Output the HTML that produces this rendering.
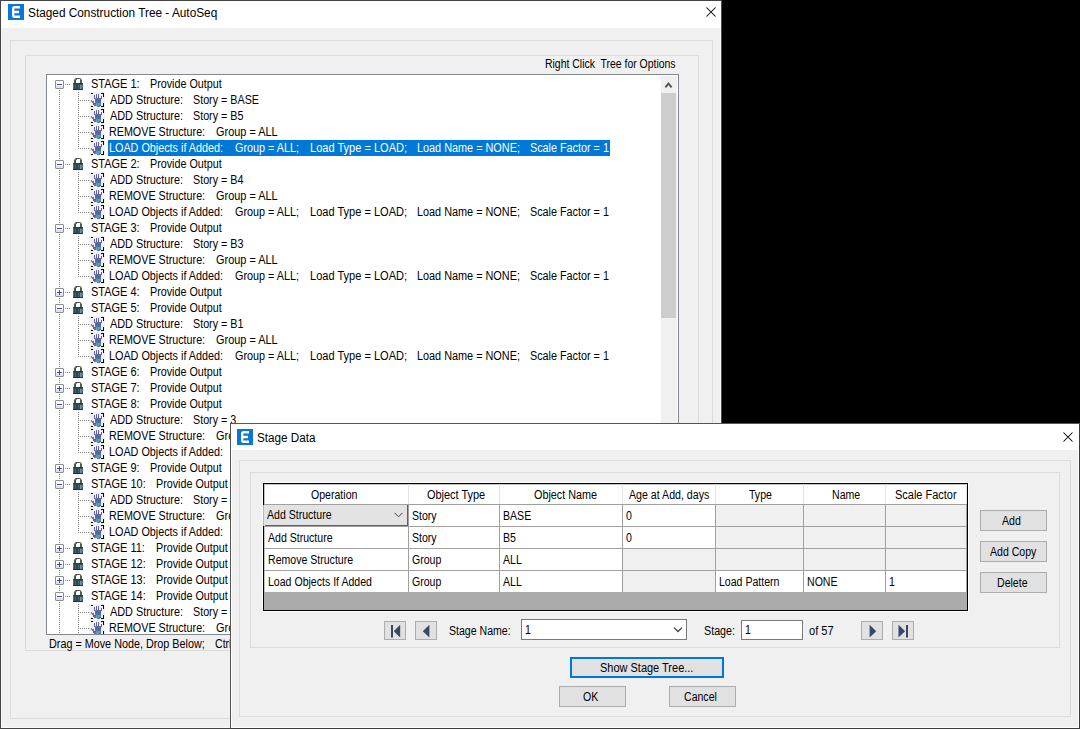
<!DOCTYPE html><html><head><meta charset="utf-8"><style>
html,body{margin:0;padding:0;width:1080px;height:729px;overflow:hidden;background:#000;}
body{position:relative;font-family:"Liberation Sans",sans-serif;}
.t{position:absolute;white-space:pre;line-height:16px;transform-origin:0 0;}
.abs{position:absolute;}
</style></head><body>
<div style="position:absolute;left:0px;top:0px;width:722px;height:729px;background:#f0f0f0;box-sizing:border-box;border:1px solid #444;border-right-color:#4a4a4a;box-shadow:inset 0 0 0 1px #f9f9f9;"></div>
<div style="position:absolute;left:1px;top:1px;width:720px;height:27px;background:#fff;"></div>
<svg class="abs" style="left:8px;top:4px" width="16" height="16" viewBox="0 0 16 16"><rect width="16" height="16" fill="#0a76d9"/><path d="M4 4.8 Q4 2 6.8 2 H12 V4.4 H6.3 V6.8 H11 V9.2 H6.3 V11.6 H12 V14 H6.8 Q4 14 4 11.2 Z" fill="#fff"/></svg>
<div class="t" style="left:28.20px;top:4.84px;font-size:12px;transform:scaleX(0.985);color:#000;">Staged Construction Tree - AutoSeq</div>
<svg class="abs" style="left:706px;top:7px" width="10" height="10" viewBox="0 0 10 10"><path d="M0.5 0.5 L9.5 9.5 M9.5 0.5 L0.5 9.5" stroke="#000" stroke-width="1.05"/></svg>
<div style="position:absolute;left:10px;top:40px;width:703px;height:679px;box-sizing:border-box;border:1px solid #dcdcdc;"></div>
<div style="position:absolute;left:25px;top:55px;width:674px;height:596px;box-sizing:border-box;border:1px solid #dcdcdc;"></div>
<div class="t" style="left:544.50px;top:55.84px;font-size:12px;transform:scaleX(0.87);color:#000;">Right Click  Tree for Options</div>
<div style="position:absolute;left:46px;top:74px;width:633px;height:561px;box-sizing:border-box;border:1px solid #828790;background:#fff;overflow:hidden;"></div>
<div style="position:absolute;left:661px;top:76px;width:16px;height:557px;background:#f0f0f0;"></div>
<div style="position:absolute;left:661px;top:93px;width:15px;height:225px;background:#cdcdcd;"></div>
<svg class="abs" style="left:664px;top:81px" width="9" height="8" viewBox="0 0 9 8"><path d="M1.4 6.4 L4.5 2.6 L7.6 6.4" stroke="#585858" stroke-width="2" fill="none"/></svg>
<div class="t" style="left:48.50px;top:635.84px;font-size:12px;transform:scaleX(0.9);color:#000;">Drag = Move Node, Drop Below;</div>
<div class="t" style="left:215.20px;top:635.84px;font-size:12px;transform:scaleX(0.88);color:#000;">Ctrl+Drag = Copy Node</div>
<div class="abs" style="left:47px;top:75px;width:614px;height:559px;overflow:hidden;">
<svg class="abs" style="left:0;top:0" width="614" height="580"><path d="M12 15h1v1h-1zM12 17h1v1h-1zM12 19h1v1h-1zM12 21h1v1h-1zM12 23h1v1h-1zM12 25h1v1h-1zM12 27h1v1h-1zM12 29h1v1h-1zM12 31h1v1h-1zM12 33h1v1h-1zM12 35h1v1h-1zM12 37h1v1h-1zM12 39h1v1h-1zM12 41h1v1h-1zM12 43h1v1h-1zM12 45h1v1h-1zM12 47h1v1h-1zM12 49h1v1h-1zM12 51h1v1h-1zM12 53h1v1h-1zM12 55h1v1h-1zM12 57h1v1h-1zM12 59h1v1h-1zM12 61h1v1h-1zM12 63h1v1h-1zM12 65h1v1h-1zM12 67h1v1h-1zM12 69h1v1h-1zM12 71h1v1h-1zM12 73h1v1h-1zM12 75h1v1h-1zM12 77h1v1h-1zM12 79h1v1h-1zM12 81h1v1h-1zM12 83h1v1h-1zM12 85h1v1h-1zM12 87h1v1h-1zM12 89h1v1h-1zM12 91h1v1h-1zM12 93h1v1h-1zM12 95h1v1h-1zM12 97h1v1h-1zM12 99h1v1h-1zM12 101h1v1h-1zM12 103h1v1h-1zM12 105h1v1h-1zM12 107h1v1h-1zM12 109h1v1h-1zM12 111h1v1h-1zM12 113h1v1h-1zM12 115h1v1h-1zM12 117h1v1h-1zM12 119h1v1h-1zM12 121h1v1h-1zM12 123h1v1h-1zM12 125h1v1h-1zM12 127h1v1h-1zM12 129h1v1h-1zM12 131h1v1h-1zM12 133h1v1h-1zM12 135h1v1h-1zM12 137h1v1h-1zM12 139h1v1h-1zM12 141h1v1h-1zM12 143h1v1h-1zM12 145h1v1h-1zM12 147h1v1h-1zM12 149h1v1h-1zM12 151h1v1h-1zM12 153h1v1h-1zM12 155h1v1h-1zM12 157h1v1h-1zM12 159h1v1h-1zM12 161h1v1h-1zM12 163h1v1h-1zM12 165h1v1h-1zM12 167h1v1h-1zM12 169h1v1h-1zM12 171h1v1h-1zM12 173h1v1h-1zM12 175h1v1h-1zM12 177h1v1h-1zM12 179h1v1h-1zM12 181h1v1h-1zM12 183h1v1h-1zM12 185h1v1h-1zM12 187h1v1h-1zM12 189h1v1h-1zM12 191h1v1h-1zM12 193h1v1h-1zM12 195h1v1h-1zM12 197h1v1h-1zM12 199h1v1h-1zM12 201h1v1h-1zM12 203h1v1h-1zM12 205h1v1h-1zM12 207h1v1h-1zM12 209h1v1h-1zM12 211h1v1h-1zM12 213h1v1h-1zM12 215h1v1h-1zM12 217h1v1h-1zM12 219h1v1h-1zM12 221h1v1h-1zM12 223h1v1h-1zM12 225h1v1h-1zM12 227h1v1h-1zM12 229h1v1h-1zM12 231h1v1h-1zM12 233h1v1h-1zM12 235h1v1h-1zM12 237h1v1h-1zM12 239h1v1h-1zM12 241h1v1h-1zM12 243h1v1h-1zM12 245h1v1h-1zM12 247h1v1h-1zM12 249h1v1h-1zM12 251h1v1h-1zM12 253h1v1h-1zM12 255h1v1h-1zM12 257h1v1h-1zM12 259h1v1h-1zM12 261h1v1h-1zM12 263h1v1h-1zM12 265h1v1h-1zM12 267h1v1h-1zM12 269h1v1h-1zM12 271h1v1h-1zM12 273h1v1h-1zM12 275h1v1h-1zM12 277h1v1h-1zM12 279h1v1h-1zM12 281h1v1h-1zM12 283h1v1h-1zM12 285h1v1h-1zM12 287h1v1h-1zM12 289h1v1h-1zM12 291h1v1h-1zM12 293h1v1h-1zM12 295h1v1h-1zM12 297h1v1h-1zM12 299h1v1h-1zM12 301h1v1h-1zM12 303h1v1h-1zM12 305h1v1h-1zM12 307h1v1h-1zM12 309h1v1h-1zM12 311h1v1h-1zM12 313h1v1h-1zM12 315h1v1h-1zM12 317h1v1h-1zM12 319h1v1h-1zM12 321h1v1h-1zM12 323h1v1h-1zM12 325h1v1h-1zM12 327h1v1h-1zM12 329h1v1h-1zM12 331h1v1h-1zM12 333h1v1h-1zM12 335h1v1h-1zM12 337h1v1h-1zM12 339h1v1h-1zM12 341h1v1h-1zM12 343h1v1h-1zM12 345h1v1h-1zM12 347h1v1h-1zM12 349h1v1h-1zM12 351h1v1h-1zM12 353h1v1h-1zM12 355h1v1h-1zM12 357h1v1h-1zM12 359h1v1h-1zM12 361h1v1h-1zM12 363h1v1h-1zM12 365h1v1h-1zM12 367h1v1h-1zM12 369h1v1h-1zM12 371h1v1h-1zM12 373h1v1h-1zM12 375h1v1h-1zM12 377h1v1h-1zM12 379h1v1h-1zM12 381h1v1h-1zM12 383h1v1h-1zM12 385h1v1h-1zM12 387h1v1h-1zM12 389h1v1h-1zM12 391h1v1h-1zM12 393h1v1h-1zM12 395h1v1h-1zM12 397h1v1h-1zM12 399h1v1h-1zM12 401h1v1h-1zM12 403h1v1h-1zM12 405h1v1h-1zM12 407h1v1h-1zM12 409h1v1h-1zM12 411h1v1h-1zM12 413h1v1h-1zM12 415h1v1h-1zM12 417h1v1h-1zM12 419h1v1h-1zM12 421h1v1h-1zM12 423h1v1h-1zM12 425h1v1h-1zM12 427h1v1h-1zM12 429h1v1h-1zM12 431h1v1h-1zM12 433h1v1h-1zM12 435h1v1h-1zM12 437h1v1h-1zM12 439h1v1h-1zM12 441h1v1h-1zM12 443h1v1h-1zM12 445h1v1h-1zM12 447h1v1h-1zM12 449h1v1h-1zM12 451h1v1h-1zM12 453h1v1h-1zM12 455h1v1h-1zM12 457h1v1h-1zM12 459h1v1h-1zM12 461h1v1h-1zM12 463h1v1h-1zM12 465h1v1h-1zM12 467h1v1h-1zM12 469h1v1h-1zM12 471h1v1h-1zM12 473h1v1h-1zM12 475h1v1h-1zM12 477h1v1h-1zM12 479h1v1h-1zM12 481h1v1h-1zM12 483h1v1h-1zM12 485h1v1h-1zM12 487h1v1h-1zM12 489h1v1h-1zM12 491h1v1h-1zM12 493h1v1h-1zM12 495h1v1h-1zM12 497h1v1h-1zM12 499h1v1h-1zM12 501h1v1h-1zM12 503h1v1h-1zM12 505h1v1h-1zM12 507h1v1h-1zM12 509h1v1h-1zM12 511h1v1h-1zM12 513h1v1h-1zM12 515h1v1h-1zM12 517h1v1h-1zM12 519h1v1h-1zM12 521h1v1h-1zM12 523h1v1h-1zM12 525h1v1h-1zM12 527h1v1h-1zM12 529h1v1h-1zM12 531h1v1h-1zM12 533h1v1h-1zM12 535h1v1h-1zM12 537h1v1h-1zM12 539h1v1h-1zM12 541h1v1h-1zM12 543h1v1h-1zM12 545h1v1h-1zM12 547h1v1h-1zM12 549h1v1h-1zM12 551h1v1h-1zM12 553h1v1h-1zM12 555h1v1h-1zM12 557h1v1h-1zM12 559h1v1h-1zM12 561h1v1h-1zM12 563h1v1h-1zM12 565h1v1h-1zM18 9h1v1h-1zM20 9h1v1h-1zM22 9h1v1h-1zM31 17h1v1h-1zM31 19h1v1h-1zM31 21h1v1h-1zM31 23h1v1h-1zM31 25h1v1h-1zM31 27h1v1h-1zM31 29h1v1h-1zM31 31h1v1h-1zM31 33h1v1h-1zM31 35h1v1h-1zM31 37h1v1h-1zM31 39h1v1h-1zM31 41h1v1h-1zM31 43h1v1h-1zM31 45h1v1h-1zM31 47h1v1h-1zM31 49h1v1h-1zM31 51h1v1h-1zM31 53h1v1h-1zM31 55h1v1h-1zM31 57h1v1h-1zM31 59h1v1h-1zM31 61h1v1h-1zM31 63h1v1h-1zM31 65h1v1h-1zM31 67h1v1h-1zM31 69h1v1h-1zM31 71h1v1h-1zM31 73h1v1h-1zM33 25h1v1h-1zM35 25h1v1h-1zM37 25h1v1h-1zM39 25h1v1h-1zM41 25h1v1h-1zM33 41h1v1h-1zM35 41h1v1h-1zM37 41h1v1h-1zM39 41h1v1h-1zM41 41h1v1h-1zM33 57h1v1h-1zM35 57h1v1h-1zM37 57h1v1h-1zM39 57h1v1h-1zM41 57h1v1h-1zM33 73h1v1h-1zM35 73h1v1h-1zM37 73h1v1h-1zM39 73h1v1h-1zM41 73h1v1h-1zM18 89h1v1h-1zM20 89h1v1h-1zM22 89h1v1h-1zM31 97h1v1h-1zM31 99h1v1h-1zM31 101h1v1h-1zM31 103h1v1h-1zM31 105h1v1h-1zM31 107h1v1h-1zM31 109h1v1h-1zM31 111h1v1h-1zM31 113h1v1h-1zM31 115h1v1h-1zM31 117h1v1h-1zM31 119h1v1h-1zM31 121h1v1h-1zM31 123h1v1h-1zM31 125h1v1h-1zM31 127h1v1h-1zM31 129h1v1h-1zM31 131h1v1h-1zM31 133h1v1h-1zM31 135h1v1h-1zM31 137h1v1h-1zM33 105h1v1h-1zM35 105h1v1h-1zM37 105h1v1h-1zM39 105h1v1h-1zM41 105h1v1h-1zM33 121h1v1h-1zM35 121h1v1h-1zM37 121h1v1h-1zM39 121h1v1h-1zM41 121h1v1h-1zM33 137h1v1h-1zM35 137h1v1h-1zM37 137h1v1h-1zM39 137h1v1h-1zM41 137h1v1h-1zM18 153h1v1h-1zM20 153h1v1h-1zM22 153h1v1h-1zM31 161h1v1h-1zM31 163h1v1h-1zM31 165h1v1h-1zM31 167h1v1h-1zM31 169h1v1h-1zM31 171h1v1h-1zM31 173h1v1h-1zM31 175h1v1h-1zM31 177h1v1h-1zM31 179h1v1h-1zM31 181h1v1h-1zM31 183h1v1h-1zM31 185h1v1h-1zM31 187h1v1h-1zM31 189h1v1h-1zM31 191h1v1h-1zM31 193h1v1h-1zM31 195h1v1h-1zM31 197h1v1h-1zM31 199h1v1h-1zM31 201h1v1h-1zM33 169h1v1h-1zM35 169h1v1h-1zM37 169h1v1h-1zM39 169h1v1h-1zM41 169h1v1h-1zM33 185h1v1h-1zM35 185h1v1h-1zM37 185h1v1h-1zM39 185h1v1h-1zM41 185h1v1h-1zM33 201h1v1h-1zM35 201h1v1h-1zM37 201h1v1h-1zM39 201h1v1h-1zM41 201h1v1h-1zM18 217h1v1h-1zM20 217h1v1h-1zM22 217h1v1h-1zM18 233h1v1h-1zM20 233h1v1h-1zM22 233h1v1h-1zM31 241h1v1h-1zM31 243h1v1h-1zM31 245h1v1h-1zM31 247h1v1h-1zM31 249h1v1h-1zM31 251h1v1h-1zM31 253h1v1h-1zM31 255h1v1h-1zM31 257h1v1h-1zM31 259h1v1h-1zM31 261h1v1h-1zM31 263h1v1h-1zM31 265h1v1h-1zM31 267h1v1h-1zM31 269h1v1h-1zM31 271h1v1h-1zM31 273h1v1h-1zM31 275h1v1h-1zM31 277h1v1h-1zM31 279h1v1h-1zM31 281h1v1h-1zM33 249h1v1h-1zM35 249h1v1h-1zM37 249h1v1h-1zM39 249h1v1h-1zM41 249h1v1h-1zM33 265h1v1h-1zM35 265h1v1h-1zM37 265h1v1h-1zM39 265h1v1h-1zM41 265h1v1h-1zM33 281h1v1h-1zM35 281h1v1h-1zM37 281h1v1h-1zM39 281h1v1h-1zM41 281h1v1h-1zM18 297h1v1h-1zM20 297h1v1h-1zM22 297h1v1h-1zM18 313h1v1h-1zM20 313h1v1h-1zM22 313h1v1h-1zM18 329h1v1h-1zM20 329h1v1h-1zM22 329h1v1h-1zM31 337h1v1h-1zM31 339h1v1h-1zM31 341h1v1h-1zM31 343h1v1h-1zM31 345h1v1h-1zM31 347h1v1h-1zM31 349h1v1h-1zM31 351h1v1h-1zM31 353h1v1h-1zM31 355h1v1h-1zM31 357h1v1h-1zM31 359h1v1h-1zM31 361h1v1h-1zM31 363h1v1h-1zM31 365h1v1h-1zM31 367h1v1h-1zM31 369h1v1h-1zM31 371h1v1h-1zM31 373h1v1h-1zM31 375h1v1h-1zM31 377h1v1h-1zM33 345h1v1h-1zM35 345h1v1h-1zM37 345h1v1h-1zM39 345h1v1h-1zM41 345h1v1h-1zM33 361h1v1h-1zM35 361h1v1h-1zM37 361h1v1h-1zM39 361h1v1h-1zM41 361h1v1h-1zM33 377h1v1h-1zM35 377h1v1h-1zM37 377h1v1h-1zM39 377h1v1h-1zM41 377h1v1h-1zM18 393h1v1h-1zM20 393h1v1h-1zM22 393h1v1h-1zM18 409h1v1h-1zM20 409h1v1h-1zM22 409h1v1h-1zM31 417h1v1h-1zM31 419h1v1h-1zM31 421h1v1h-1zM31 423h1v1h-1zM31 425h1v1h-1zM31 427h1v1h-1zM31 429h1v1h-1zM31 431h1v1h-1zM31 433h1v1h-1zM31 435h1v1h-1zM31 437h1v1h-1zM31 439h1v1h-1zM31 441h1v1h-1zM31 443h1v1h-1zM31 445h1v1h-1zM31 447h1v1h-1zM31 449h1v1h-1zM31 451h1v1h-1zM31 453h1v1h-1zM31 455h1v1h-1zM31 457h1v1h-1zM33 425h1v1h-1zM35 425h1v1h-1zM37 425h1v1h-1zM39 425h1v1h-1zM41 425h1v1h-1zM33 441h1v1h-1zM35 441h1v1h-1zM37 441h1v1h-1zM39 441h1v1h-1zM41 441h1v1h-1zM33 457h1v1h-1zM35 457h1v1h-1zM37 457h1v1h-1zM39 457h1v1h-1zM41 457h1v1h-1zM18 473h1v1h-1zM20 473h1v1h-1zM22 473h1v1h-1zM18 489h1v1h-1zM20 489h1v1h-1zM22 489h1v1h-1zM18 505h1v1h-1zM20 505h1v1h-1zM22 505h1v1h-1zM18 521h1v1h-1zM20 521h1v1h-1zM22 521h1v1h-1zM31 529h1v1h-1zM31 531h1v1h-1zM31 533h1v1h-1zM31 535h1v1h-1zM31 537h1v1h-1zM31 539h1v1h-1zM31 541h1v1h-1zM31 543h1v1h-1zM31 545h1v1h-1zM31 547h1v1h-1zM31 549h1v1h-1zM31 551h1v1h-1zM31 553h1v1h-1zM31 555h1v1h-1zM31 557h1v1h-1zM31 559h1v1h-1zM31 561h1v1h-1zM31 563h1v1h-1zM31 565h1v1h-1zM33 537h1v1h-1zM35 537h1v1h-1zM37 537h1v1h-1zM39 537h1v1h-1zM41 537h1v1h-1zM33 553h1v1h-1zM35 553h1v1h-1zM37 553h1v1h-1zM39 553h1v1h-1zM41 553h1v1h-1z" fill="#808080"/></svg>
<svg class="abs" style="left:8px;top:5px" width="9" height="9" viewBox="0 0 9 9" shape-rendering="crispEdges"><rect x="1" y="1" width="7" height="3" fill="#fdfdfd"/><rect x="1" y="4" width="7" height="2" fill="#f0f0f0"/><rect x="1" y="6" width="7" height="2" fill="#e2e2e2"/><rect x="1" y="0" width="7" height="1" fill="#8c8c8c"/><rect x="1" y="8" width="7" height="1" fill="#8c8c8c"/><rect x="0" y="1" width="1" height="7" fill="#8c8c8c"/><rect x="8" y="1" width="1" height="7" fill="#8c8c8c"/><rect x="0" y="0" width="1" height="1" fill="#c8c8c8"/><rect x="8" y="0" width="1" height="1" fill="#c8c8c8"/><rect x="0" y="8" width="1" height="1" fill="#c8c8c8"/><rect x="8" y="8" width="1" height="1" fill="#c8c8c8"/><rect x="2" y="4" width="5" height="1" fill="#3a4fa0"/></svg>
<svg class="abs" style="left:23px;top:1px" width="16" height="16" viewBox="0 0 16 16" shape-rendering="crispEdges"><rect x="5" y="2" width="6" height="1" fill="#4a4a4a"/><rect x="4" y="3" width="2" height="4" fill="#4a4a4a"/><rect x="10" y="3" width="2" height="4" fill="#5a5a5a"/><rect x="4" y="3" width="1" height="1" fill="#9a9a9a"/><rect x="11" y="3" width="1" height="1" fill="#a0a0a0"/><rect x="5" y="2" width="1" height="1" fill="#8a8a8a"/><rect x="10" y="2" width="1" height="1" fill="#8a8a8a"/><rect x="5" y="3" width="1" height="1" fill="#3f7f78"/><rect x="10" y="3" width="1" height="1" fill="#3f7f78"/><rect x="9" y="2" width="1" height="1" fill="#2c7a70"/><rect x="4" y="5" width="1" height="1" fill="#2c7a70"/><rect x="6" y="3" width="1" height="1" fill="#7a70c8"/><rect x="3" y="7" width="10" height="7" fill="#2c7a70"/><rect x="4" y="8" width="1" height="5" fill="#1e5450"/><rect x="9" y="8" width="1" height="5" fill="#1e5450"/><rect x="6" y="9" width="2" height="4" fill="#3a2e86"/><rect x="10" y="8" width="1" height="5" fill="#8f84d0"/><rect x="11" y="8" width="1" height="5" fill="#4a7f90"/><rect x="3" y="7" width="10" height="1" fill="#3a3a3a"/><rect x="4" y="8" width="8" height="1" fill="#2f4f4c"/><rect x="3" y="13" width="10" height="1" fill="#2a2a2a"/></svg>
<div class="t" style="left:43.70px;top:0.84px;font-size:12px;transform:scaleX(0.915);color:#000;">STAGE 1:</div>
<div class="t" style="left:103.20px;top:0.84px;font-size:12px;transform:scaleX(0.895);color:#000;">Provide Output</div>
<svg class="abs" style="left:42px;top:17px" width="16" height="16" viewBox="0 0 16 16" shape-rendering="crispEdges"><rect x="0" y="0" width="16" height="16" fill="#f0f0f0"/><rect x="2" y="1" width="2" height="1" fill="#000"/><rect x="12" y="1" width="3" height="1" fill="#000"/><rect x="14" y="1" width="1" height="4" fill="#000"/><rect x="14" y="11" width="1" height="4" fill="#000"/><rect x="12" y="14" width="3" height="1" fill="#000"/><rect x="2" y="14" width="2" height="1" fill="#000"/><rect x="5" y="3" width="1" height="4" fill="#655ea8"/><rect x="7" y="2" width="1" height="4" fill="#655ea8"/><rect x="9" y="2" width="1" height="5" fill="#655ea8"/><rect x="12" y="4" width="1" height="3" fill="#655ea8"/><rect x="5" y="6" width="8" height="1" fill="#655ea8"/><rect x="6" y="7" width="6" height="7" fill="#655ea8"/><rect x="9" y="3" width="1" height="1" fill="#40908a"/><rect x="12" y="5" width="1" height="1" fill="#40908a"/><rect x="6" y="6" width="1" height="1" fill="#5a95da"/><rect x="7" y="6" width="1" height="1" fill="#40908a"/><rect x="10" y="6" width="1" height="1" fill="#40908a"/><rect x="2" y="8" width="1" height="1" fill="#9a9aaa"/><rect x="3" y="9" width="1" height="1" fill="#5a95da"/><rect x="4" y="9" width="1" height="1" fill="#40908a"/><rect x="3" y="10" width="2" height="1" fill="#655ea8"/><rect x="4" y="11" width="2" height="1" fill="#655ea8"/><rect x="5" y="12" width="1" height="1" fill="#655ea8"/><rect x="2" y="9" width="1" height="1" fill="#5a95da"/><rect x="4" y="12" width="1" height="1" fill="#655ea8"/><rect x="5" y="13" width="1" height="1" fill="#655ea8"/><rect x="8" y="14" width="3" height="1" fill="#40908a"/><rect x="7" y="11" width="4" height="2" fill="#5a95da"/><rect x="7" y="13" width="3" height="1" fill="#5a95da"/><rect x="6" y="12" width="1" height="2" fill="#40908a"/><rect x="6" y="10" width="2" height="1" fill="#40908a"/><rect x="10" y="10" width="2" height="1" fill="#40908a"/><rect x="11" y="11" width="1" height="2" fill="#40908a"/><rect x="10" y="13" width="1" height="1" fill="#40908a"/></svg>
<div class="t" style="left:62.50px;top:16.84px;font-size:12px;transform:scaleX(0.905);color:#000;">ADD Structure:</div>
<div class="t" style="left:146.20px;top:16.84px;font-size:12px;transform:scaleX(0.895);color:#000;">Story = BASE</div>
<svg class="abs" style="left:42px;top:33px" width="16" height="16" viewBox="0 0 16 16" shape-rendering="crispEdges"><rect x="0" y="0" width="16" height="16" fill="#f0f0f0"/><rect x="2" y="1" width="2" height="1" fill="#000"/><rect x="12" y="1" width="3" height="1" fill="#000"/><rect x="14" y="1" width="1" height="4" fill="#000"/><rect x="14" y="11" width="1" height="4" fill="#000"/><rect x="12" y="14" width="3" height="1" fill="#000"/><rect x="2" y="14" width="2" height="1" fill="#000"/><rect x="5" y="3" width="1" height="4" fill="#655ea8"/><rect x="7" y="2" width="1" height="4" fill="#655ea8"/><rect x="9" y="2" width="1" height="5" fill="#655ea8"/><rect x="12" y="4" width="1" height="3" fill="#655ea8"/><rect x="5" y="6" width="8" height="1" fill="#655ea8"/><rect x="6" y="7" width="6" height="7" fill="#655ea8"/><rect x="9" y="3" width="1" height="1" fill="#40908a"/><rect x="12" y="5" width="1" height="1" fill="#40908a"/><rect x="6" y="6" width="1" height="1" fill="#5a95da"/><rect x="7" y="6" width="1" height="1" fill="#40908a"/><rect x="10" y="6" width="1" height="1" fill="#40908a"/><rect x="2" y="8" width="1" height="1" fill="#9a9aaa"/><rect x="3" y="9" width="1" height="1" fill="#5a95da"/><rect x="4" y="9" width="1" height="1" fill="#40908a"/><rect x="3" y="10" width="2" height="1" fill="#655ea8"/><rect x="4" y="11" width="2" height="1" fill="#655ea8"/><rect x="5" y="12" width="1" height="1" fill="#655ea8"/><rect x="2" y="9" width="1" height="1" fill="#5a95da"/><rect x="4" y="12" width="1" height="1" fill="#655ea8"/><rect x="5" y="13" width="1" height="1" fill="#655ea8"/><rect x="8" y="14" width="3" height="1" fill="#40908a"/><rect x="7" y="11" width="4" height="2" fill="#5a95da"/><rect x="7" y="13" width="3" height="1" fill="#5a95da"/><rect x="6" y="12" width="1" height="2" fill="#40908a"/><rect x="6" y="10" width="2" height="1" fill="#40908a"/><rect x="10" y="10" width="2" height="1" fill="#40908a"/><rect x="11" y="11" width="1" height="2" fill="#40908a"/><rect x="10" y="13" width="1" height="1" fill="#40908a"/></svg>
<div class="t" style="left:62.50px;top:32.84px;font-size:12px;transform:scaleX(0.905);color:#000;">ADD Structure:</div>
<div class="t" style="left:146.20px;top:32.84px;font-size:12px;transform:scaleX(0.895);color:#000;">Story = B5</div>
<svg class="abs" style="left:42px;top:49px" width="16" height="16" viewBox="0 0 16 16" shape-rendering="crispEdges"><rect x="0" y="0" width="16" height="16" fill="#f0f0f0"/><rect x="2" y="1" width="2" height="1" fill="#000"/><rect x="12" y="1" width="3" height="1" fill="#000"/><rect x="14" y="1" width="1" height="4" fill="#000"/><rect x="14" y="11" width="1" height="4" fill="#000"/><rect x="12" y="14" width="3" height="1" fill="#000"/><rect x="2" y="14" width="2" height="1" fill="#000"/><rect x="5" y="3" width="1" height="4" fill="#655ea8"/><rect x="7" y="2" width="1" height="4" fill="#655ea8"/><rect x="9" y="2" width="1" height="5" fill="#655ea8"/><rect x="12" y="4" width="1" height="3" fill="#655ea8"/><rect x="5" y="6" width="8" height="1" fill="#655ea8"/><rect x="6" y="7" width="6" height="7" fill="#655ea8"/><rect x="9" y="3" width="1" height="1" fill="#40908a"/><rect x="12" y="5" width="1" height="1" fill="#40908a"/><rect x="6" y="6" width="1" height="1" fill="#5a95da"/><rect x="7" y="6" width="1" height="1" fill="#40908a"/><rect x="10" y="6" width="1" height="1" fill="#40908a"/><rect x="2" y="8" width="1" height="1" fill="#9a9aaa"/><rect x="3" y="9" width="1" height="1" fill="#5a95da"/><rect x="4" y="9" width="1" height="1" fill="#40908a"/><rect x="3" y="10" width="2" height="1" fill="#655ea8"/><rect x="4" y="11" width="2" height="1" fill="#655ea8"/><rect x="5" y="12" width="1" height="1" fill="#655ea8"/><rect x="2" y="9" width="1" height="1" fill="#5a95da"/><rect x="4" y="12" width="1" height="1" fill="#655ea8"/><rect x="5" y="13" width="1" height="1" fill="#655ea8"/><rect x="8" y="14" width="3" height="1" fill="#40908a"/><rect x="7" y="11" width="4" height="2" fill="#5a95da"/><rect x="7" y="13" width="3" height="1" fill="#5a95da"/><rect x="6" y="12" width="1" height="2" fill="#40908a"/><rect x="6" y="10" width="2" height="1" fill="#40908a"/><rect x="10" y="10" width="2" height="1" fill="#40908a"/><rect x="11" y="11" width="1" height="2" fill="#40908a"/><rect x="10" y="13" width="1" height="1" fill="#40908a"/></svg>
<div class="t" style="left:62.00px;top:48.84px;font-size:12px;transform:scaleX(0.895);color:#000;">REMOVE Structure:</div>
<div class="t" style="left:168.70px;top:48.84px;font-size:12px;transform:scaleX(0.91);color:#000;">Group = ALL</div>
<svg class="abs" style="left:42px;top:65px" width="16" height="16" viewBox="0 0 16 16" shape-rendering="crispEdges"><rect x="0" y="0" width="16" height="16" fill="#f0f0f0"/><rect x="2" y="1" width="2" height="1" fill="#000"/><rect x="12" y="1" width="3" height="1" fill="#000"/><rect x="14" y="1" width="1" height="4" fill="#000"/><rect x="14" y="11" width="1" height="4" fill="#000"/><rect x="12" y="14" width="3" height="1" fill="#000"/><rect x="2" y="14" width="2" height="1" fill="#000"/><rect x="5" y="3" width="1" height="4" fill="#655ea8"/><rect x="7" y="2" width="1" height="4" fill="#655ea8"/><rect x="9" y="2" width="1" height="5" fill="#655ea8"/><rect x="12" y="4" width="1" height="3" fill="#655ea8"/><rect x="5" y="6" width="8" height="1" fill="#655ea8"/><rect x="6" y="7" width="6" height="7" fill="#655ea8"/><rect x="9" y="3" width="1" height="1" fill="#40908a"/><rect x="12" y="5" width="1" height="1" fill="#40908a"/><rect x="6" y="6" width="1" height="1" fill="#5a95da"/><rect x="7" y="6" width="1" height="1" fill="#40908a"/><rect x="10" y="6" width="1" height="1" fill="#40908a"/><rect x="2" y="8" width="1" height="1" fill="#9a9aaa"/><rect x="3" y="9" width="1" height="1" fill="#5a95da"/><rect x="4" y="9" width="1" height="1" fill="#40908a"/><rect x="3" y="10" width="2" height="1" fill="#655ea8"/><rect x="4" y="11" width="2" height="1" fill="#655ea8"/><rect x="5" y="12" width="1" height="1" fill="#655ea8"/><rect x="2" y="9" width="1" height="1" fill="#5a95da"/><rect x="4" y="12" width="1" height="1" fill="#655ea8"/><rect x="5" y="13" width="1" height="1" fill="#655ea8"/><rect x="8" y="14" width="3" height="1" fill="#40908a"/><rect x="7" y="11" width="4" height="2" fill="#5a95da"/><rect x="7" y="13" width="3" height="1" fill="#5a95da"/><rect x="6" y="12" width="1" height="2" fill="#40908a"/><rect x="6" y="10" width="2" height="1" fill="#40908a"/><rect x="10" y="10" width="2" height="1" fill="#40908a"/><rect x="11" y="11" width="1" height="2" fill="#40908a"/><rect x="10" y="13" width="1" height="1" fill="#40908a"/></svg>
<div style="position:absolute;left:61px;top:65px;width:502px;height:16px;background:#0078d7;"></div>
<div class="t" style="left:62.00px;top:64.84px;font-size:12px;transform:scaleX(0.9);color:#fff;">LOAD Objects if Added:</div>
<div class="t" style="left:187.70px;top:64.84px;font-size:12px;transform:scaleX(0.9);color:#fff;">Group = ALL;</div>
<div class="t" style="left:263.20px;top:64.84px;font-size:12px;transform:scaleX(0.92);color:#fff;">Load Type = LOAD;</div>
<div class="t" style="left:370.20px;top:64.84px;font-size:12px;transform:scaleX(0.905);color:#fff;">Load Name = NONE;</div>
<div class="t" style="left:482.50px;top:64.84px;font-size:12px;transform:scaleX(0.9);color:#fff;">Scale Factor = 1</div>
<svg class="abs" style="left:8px;top:85px" width="9" height="9" viewBox="0 0 9 9" shape-rendering="crispEdges"><rect x="1" y="1" width="7" height="3" fill="#fdfdfd"/><rect x="1" y="4" width="7" height="2" fill="#f0f0f0"/><rect x="1" y="6" width="7" height="2" fill="#e2e2e2"/><rect x="1" y="0" width="7" height="1" fill="#8c8c8c"/><rect x="1" y="8" width="7" height="1" fill="#8c8c8c"/><rect x="0" y="1" width="1" height="7" fill="#8c8c8c"/><rect x="8" y="1" width="1" height="7" fill="#8c8c8c"/><rect x="0" y="0" width="1" height="1" fill="#c8c8c8"/><rect x="8" y="0" width="1" height="1" fill="#c8c8c8"/><rect x="0" y="8" width="1" height="1" fill="#c8c8c8"/><rect x="8" y="8" width="1" height="1" fill="#c8c8c8"/><rect x="2" y="4" width="5" height="1" fill="#3a4fa0"/></svg>
<svg class="abs" style="left:23px;top:81px" width="16" height="16" viewBox="0 0 16 16" shape-rendering="crispEdges"><rect x="5" y="2" width="6" height="1" fill="#4a4a4a"/><rect x="4" y="3" width="2" height="4" fill="#4a4a4a"/><rect x="10" y="3" width="2" height="4" fill="#5a5a5a"/><rect x="4" y="3" width="1" height="1" fill="#9a9a9a"/><rect x="11" y="3" width="1" height="1" fill="#a0a0a0"/><rect x="5" y="2" width="1" height="1" fill="#8a8a8a"/><rect x="10" y="2" width="1" height="1" fill="#8a8a8a"/><rect x="5" y="3" width="1" height="1" fill="#3f7f78"/><rect x="10" y="3" width="1" height="1" fill="#3f7f78"/><rect x="9" y="2" width="1" height="1" fill="#2c7a70"/><rect x="4" y="5" width="1" height="1" fill="#2c7a70"/><rect x="6" y="3" width="1" height="1" fill="#7a70c8"/><rect x="3" y="7" width="10" height="7" fill="#2c7a70"/><rect x="4" y="8" width="1" height="5" fill="#1e5450"/><rect x="9" y="8" width="1" height="5" fill="#1e5450"/><rect x="6" y="9" width="2" height="4" fill="#3a2e86"/><rect x="10" y="8" width="1" height="5" fill="#8f84d0"/><rect x="11" y="8" width="1" height="5" fill="#4a7f90"/><rect x="3" y="7" width="10" height="1" fill="#3a3a3a"/><rect x="4" y="8" width="8" height="1" fill="#2f4f4c"/><rect x="3" y="13" width="10" height="1" fill="#2a2a2a"/></svg>
<div class="t" style="left:43.70px;top:80.84px;font-size:12px;transform:scaleX(0.915);color:#000;">STAGE 2:</div>
<div class="t" style="left:103.20px;top:80.84px;font-size:12px;transform:scaleX(0.895);color:#000;">Provide Output</div>
<svg class="abs" style="left:42px;top:97px" width="16" height="16" viewBox="0 0 16 16" shape-rendering="crispEdges"><rect x="0" y="0" width="16" height="16" fill="#f0f0f0"/><rect x="2" y="1" width="2" height="1" fill="#000"/><rect x="12" y="1" width="3" height="1" fill="#000"/><rect x="14" y="1" width="1" height="4" fill="#000"/><rect x="14" y="11" width="1" height="4" fill="#000"/><rect x="12" y="14" width="3" height="1" fill="#000"/><rect x="2" y="14" width="2" height="1" fill="#000"/><rect x="5" y="3" width="1" height="4" fill="#655ea8"/><rect x="7" y="2" width="1" height="4" fill="#655ea8"/><rect x="9" y="2" width="1" height="5" fill="#655ea8"/><rect x="12" y="4" width="1" height="3" fill="#655ea8"/><rect x="5" y="6" width="8" height="1" fill="#655ea8"/><rect x="6" y="7" width="6" height="7" fill="#655ea8"/><rect x="9" y="3" width="1" height="1" fill="#40908a"/><rect x="12" y="5" width="1" height="1" fill="#40908a"/><rect x="6" y="6" width="1" height="1" fill="#5a95da"/><rect x="7" y="6" width="1" height="1" fill="#40908a"/><rect x="10" y="6" width="1" height="1" fill="#40908a"/><rect x="2" y="8" width="1" height="1" fill="#9a9aaa"/><rect x="3" y="9" width="1" height="1" fill="#5a95da"/><rect x="4" y="9" width="1" height="1" fill="#40908a"/><rect x="3" y="10" width="2" height="1" fill="#655ea8"/><rect x="4" y="11" width="2" height="1" fill="#655ea8"/><rect x="5" y="12" width="1" height="1" fill="#655ea8"/><rect x="2" y="9" width="1" height="1" fill="#5a95da"/><rect x="4" y="12" width="1" height="1" fill="#655ea8"/><rect x="5" y="13" width="1" height="1" fill="#655ea8"/><rect x="8" y="14" width="3" height="1" fill="#40908a"/><rect x="7" y="11" width="4" height="2" fill="#5a95da"/><rect x="7" y="13" width="3" height="1" fill="#5a95da"/><rect x="6" y="12" width="1" height="2" fill="#40908a"/><rect x="6" y="10" width="2" height="1" fill="#40908a"/><rect x="10" y="10" width="2" height="1" fill="#40908a"/><rect x="11" y="11" width="1" height="2" fill="#40908a"/><rect x="10" y="13" width="1" height="1" fill="#40908a"/></svg>
<div class="t" style="left:62.50px;top:96.84px;font-size:12px;transform:scaleX(0.905);color:#000;">ADD Structure:</div>
<div class="t" style="left:146.20px;top:96.84px;font-size:12px;transform:scaleX(0.895);color:#000;">Story = B4</div>
<svg class="abs" style="left:42px;top:113px" width="16" height="16" viewBox="0 0 16 16" shape-rendering="crispEdges"><rect x="0" y="0" width="16" height="16" fill="#f0f0f0"/><rect x="2" y="1" width="2" height="1" fill="#000"/><rect x="12" y="1" width="3" height="1" fill="#000"/><rect x="14" y="1" width="1" height="4" fill="#000"/><rect x="14" y="11" width="1" height="4" fill="#000"/><rect x="12" y="14" width="3" height="1" fill="#000"/><rect x="2" y="14" width="2" height="1" fill="#000"/><rect x="5" y="3" width="1" height="4" fill="#655ea8"/><rect x="7" y="2" width="1" height="4" fill="#655ea8"/><rect x="9" y="2" width="1" height="5" fill="#655ea8"/><rect x="12" y="4" width="1" height="3" fill="#655ea8"/><rect x="5" y="6" width="8" height="1" fill="#655ea8"/><rect x="6" y="7" width="6" height="7" fill="#655ea8"/><rect x="9" y="3" width="1" height="1" fill="#40908a"/><rect x="12" y="5" width="1" height="1" fill="#40908a"/><rect x="6" y="6" width="1" height="1" fill="#5a95da"/><rect x="7" y="6" width="1" height="1" fill="#40908a"/><rect x="10" y="6" width="1" height="1" fill="#40908a"/><rect x="2" y="8" width="1" height="1" fill="#9a9aaa"/><rect x="3" y="9" width="1" height="1" fill="#5a95da"/><rect x="4" y="9" width="1" height="1" fill="#40908a"/><rect x="3" y="10" width="2" height="1" fill="#655ea8"/><rect x="4" y="11" width="2" height="1" fill="#655ea8"/><rect x="5" y="12" width="1" height="1" fill="#655ea8"/><rect x="2" y="9" width="1" height="1" fill="#5a95da"/><rect x="4" y="12" width="1" height="1" fill="#655ea8"/><rect x="5" y="13" width="1" height="1" fill="#655ea8"/><rect x="8" y="14" width="3" height="1" fill="#40908a"/><rect x="7" y="11" width="4" height="2" fill="#5a95da"/><rect x="7" y="13" width="3" height="1" fill="#5a95da"/><rect x="6" y="12" width="1" height="2" fill="#40908a"/><rect x="6" y="10" width="2" height="1" fill="#40908a"/><rect x="10" y="10" width="2" height="1" fill="#40908a"/><rect x="11" y="11" width="1" height="2" fill="#40908a"/><rect x="10" y="13" width="1" height="1" fill="#40908a"/></svg>
<div class="t" style="left:62.00px;top:112.84px;font-size:12px;transform:scaleX(0.895);color:#000;">REMOVE Structure:</div>
<div class="t" style="left:168.70px;top:112.84px;font-size:12px;transform:scaleX(0.91);color:#000;">Group = ALL</div>
<svg class="abs" style="left:42px;top:129px" width="16" height="16" viewBox="0 0 16 16" shape-rendering="crispEdges"><rect x="0" y="0" width="16" height="16" fill="#f0f0f0"/><rect x="2" y="1" width="2" height="1" fill="#000"/><rect x="12" y="1" width="3" height="1" fill="#000"/><rect x="14" y="1" width="1" height="4" fill="#000"/><rect x="14" y="11" width="1" height="4" fill="#000"/><rect x="12" y="14" width="3" height="1" fill="#000"/><rect x="2" y="14" width="2" height="1" fill="#000"/><rect x="5" y="3" width="1" height="4" fill="#655ea8"/><rect x="7" y="2" width="1" height="4" fill="#655ea8"/><rect x="9" y="2" width="1" height="5" fill="#655ea8"/><rect x="12" y="4" width="1" height="3" fill="#655ea8"/><rect x="5" y="6" width="8" height="1" fill="#655ea8"/><rect x="6" y="7" width="6" height="7" fill="#655ea8"/><rect x="9" y="3" width="1" height="1" fill="#40908a"/><rect x="12" y="5" width="1" height="1" fill="#40908a"/><rect x="6" y="6" width="1" height="1" fill="#5a95da"/><rect x="7" y="6" width="1" height="1" fill="#40908a"/><rect x="10" y="6" width="1" height="1" fill="#40908a"/><rect x="2" y="8" width="1" height="1" fill="#9a9aaa"/><rect x="3" y="9" width="1" height="1" fill="#5a95da"/><rect x="4" y="9" width="1" height="1" fill="#40908a"/><rect x="3" y="10" width="2" height="1" fill="#655ea8"/><rect x="4" y="11" width="2" height="1" fill="#655ea8"/><rect x="5" y="12" width="1" height="1" fill="#655ea8"/><rect x="2" y="9" width="1" height="1" fill="#5a95da"/><rect x="4" y="12" width="1" height="1" fill="#655ea8"/><rect x="5" y="13" width="1" height="1" fill="#655ea8"/><rect x="8" y="14" width="3" height="1" fill="#40908a"/><rect x="7" y="11" width="4" height="2" fill="#5a95da"/><rect x="7" y="13" width="3" height="1" fill="#5a95da"/><rect x="6" y="12" width="1" height="2" fill="#40908a"/><rect x="6" y="10" width="2" height="1" fill="#40908a"/><rect x="10" y="10" width="2" height="1" fill="#40908a"/><rect x="11" y="11" width="1" height="2" fill="#40908a"/><rect x="10" y="13" width="1" height="1" fill="#40908a"/></svg>
<div class="t" style="left:62.00px;top:128.84px;font-size:12px;transform:scaleX(0.9);color:#000;">LOAD Objects if Added:</div>
<div class="t" style="left:187.70px;top:128.84px;font-size:12px;transform:scaleX(0.9);color:#000;">Group = ALL;</div>
<div class="t" style="left:263.20px;top:128.84px;font-size:12px;transform:scaleX(0.92);color:#000;">Load Type = LOAD;</div>
<div class="t" style="left:370.20px;top:128.84px;font-size:12px;transform:scaleX(0.905);color:#000;">Load Name = NONE;</div>
<div class="t" style="left:482.50px;top:128.84px;font-size:12px;transform:scaleX(0.9);color:#000;">Scale Factor = 1</div>
<svg class="abs" style="left:8px;top:149px" width="9" height="9" viewBox="0 0 9 9" shape-rendering="crispEdges"><rect x="1" y="1" width="7" height="3" fill="#fdfdfd"/><rect x="1" y="4" width="7" height="2" fill="#f0f0f0"/><rect x="1" y="6" width="7" height="2" fill="#e2e2e2"/><rect x="1" y="0" width="7" height="1" fill="#8c8c8c"/><rect x="1" y="8" width="7" height="1" fill="#8c8c8c"/><rect x="0" y="1" width="1" height="7" fill="#8c8c8c"/><rect x="8" y="1" width="1" height="7" fill="#8c8c8c"/><rect x="0" y="0" width="1" height="1" fill="#c8c8c8"/><rect x="8" y="0" width="1" height="1" fill="#c8c8c8"/><rect x="0" y="8" width="1" height="1" fill="#c8c8c8"/><rect x="8" y="8" width="1" height="1" fill="#c8c8c8"/><rect x="2" y="4" width="5" height="1" fill="#3a4fa0"/></svg>
<svg class="abs" style="left:23px;top:145px" width="16" height="16" viewBox="0 0 16 16" shape-rendering="crispEdges"><rect x="5" y="2" width="6" height="1" fill="#4a4a4a"/><rect x="4" y="3" width="2" height="4" fill="#4a4a4a"/><rect x="10" y="3" width="2" height="4" fill="#5a5a5a"/><rect x="4" y="3" width="1" height="1" fill="#9a9a9a"/><rect x="11" y="3" width="1" height="1" fill="#a0a0a0"/><rect x="5" y="2" width="1" height="1" fill="#8a8a8a"/><rect x="10" y="2" width="1" height="1" fill="#8a8a8a"/><rect x="5" y="3" width="1" height="1" fill="#3f7f78"/><rect x="10" y="3" width="1" height="1" fill="#3f7f78"/><rect x="9" y="2" width="1" height="1" fill="#2c7a70"/><rect x="4" y="5" width="1" height="1" fill="#2c7a70"/><rect x="6" y="3" width="1" height="1" fill="#7a70c8"/><rect x="3" y="7" width="10" height="7" fill="#2c7a70"/><rect x="4" y="8" width="1" height="5" fill="#1e5450"/><rect x="9" y="8" width="1" height="5" fill="#1e5450"/><rect x="6" y="9" width="2" height="4" fill="#3a2e86"/><rect x="10" y="8" width="1" height="5" fill="#8f84d0"/><rect x="11" y="8" width="1" height="5" fill="#4a7f90"/><rect x="3" y="7" width="10" height="1" fill="#3a3a3a"/><rect x="4" y="8" width="8" height="1" fill="#2f4f4c"/><rect x="3" y="13" width="10" height="1" fill="#2a2a2a"/></svg>
<div class="t" style="left:43.70px;top:144.84px;font-size:12px;transform:scaleX(0.915);color:#000;">STAGE 3:</div>
<div class="t" style="left:103.20px;top:144.84px;font-size:12px;transform:scaleX(0.895);color:#000;">Provide Output</div>
<svg class="abs" style="left:42px;top:161px" width="16" height="16" viewBox="0 0 16 16" shape-rendering="crispEdges"><rect x="0" y="0" width="16" height="16" fill="#f0f0f0"/><rect x="2" y="1" width="2" height="1" fill="#000"/><rect x="12" y="1" width="3" height="1" fill="#000"/><rect x="14" y="1" width="1" height="4" fill="#000"/><rect x="14" y="11" width="1" height="4" fill="#000"/><rect x="12" y="14" width="3" height="1" fill="#000"/><rect x="2" y="14" width="2" height="1" fill="#000"/><rect x="5" y="3" width="1" height="4" fill="#655ea8"/><rect x="7" y="2" width="1" height="4" fill="#655ea8"/><rect x="9" y="2" width="1" height="5" fill="#655ea8"/><rect x="12" y="4" width="1" height="3" fill="#655ea8"/><rect x="5" y="6" width="8" height="1" fill="#655ea8"/><rect x="6" y="7" width="6" height="7" fill="#655ea8"/><rect x="9" y="3" width="1" height="1" fill="#40908a"/><rect x="12" y="5" width="1" height="1" fill="#40908a"/><rect x="6" y="6" width="1" height="1" fill="#5a95da"/><rect x="7" y="6" width="1" height="1" fill="#40908a"/><rect x="10" y="6" width="1" height="1" fill="#40908a"/><rect x="2" y="8" width="1" height="1" fill="#9a9aaa"/><rect x="3" y="9" width="1" height="1" fill="#5a95da"/><rect x="4" y="9" width="1" height="1" fill="#40908a"/><rect x="3" y="10" width="2" height="1" fill="#655ea8"/><rect x="4" y="11" width="2" height="1" fill="#655ea8"/><rect x="5" y="12" width="1" height="1" fill="#655ea8"/><rect x="2" y="9" width="1" height="1" fill="#5a95da"/><rect x="4" y="12" width="1" height="1" fill="#655ea8"/><rect x="5" y="13" width="1" height="1" fill="#655ea8"/><rect x="8" y="14" width="3" height="1" fill="#40908a"/><rect x="7" y="11" width="4" height="2" fill="#5a95da"/><rect x="7" y="13" width="3" height="1" fill="#5a95da"/><rect x="6" y="12" width="1" height="2" fill="#40908a"/><rect x="6" y="10" width="2" height="1" fill="#40908a"/><rect x="10" y="10" width="2" height="1" fill="#40908a"/><rect x="11" y="11" width="1" height="2" fill="#40908a"/><rect x="10" y="13" width="1" height="1" fill="#40908a"/></svg>
<div class="t" style="left:62.50px;top:160.84px;font-size:12px;transform:scaleX(0.905);color:#000;">ADD Structure:</div>
<div class="t" style="left:146.20px;top:160.84px;font-size:12px;transform:scaleX(0.895);color:#000;">Story = B3</div>
<svg class="abs" style="left:42px;top:177px" width="16" height="16" viewBox="0 0 16 16" shape-rendering="crispEdges"><rect x="0" y="0" width="16" height="16" fill="#f0f0f0"/><rect x="2" y="1" width="2" height="1" fill="#000"/><rect x="12" y="1" width="3" height="1" fill="#000"/><rect x="14" y="1" width="1" height="4" fill="#000"/><rect x="14" y="11" width="1" height="4" fill="#000"/><rect x="12" y="14" width="3" height="1" fill="#000"/><rect x="2" y="14" width="2" height="1" fill="#000"/><rect x="5" y="3" width="1" height="4" fill="#655ea8"/><rect x="7" y="2" width="1" height="4" fill="#655ea8"/><rect x="9" y="2" width="1" height="5" fill="#655ea8"/><rect x="12" y="4" width="1" height="3" fill="#655ea8"/><rect x="5" y="6" width="8" height="1" fill="#655ea8"/><rect x="6" y="7" width="6" height="7" fill="#655ea8"/><rect x="9" y="3" width="1" height="1" fill="#40908a"/><rect x="12" y="5" width="1" height="1" fill="#40908a"/><rect x="6" y="6" width="1" height="1" fill="#5a95da"/><rect x="7" y="6" width="1" height="1" fill="#40908a"/><rect x="10" y="6" width="1" height="1" fill="#40908a"/><rect x="2" y="8" width="1" height="1" fill="#9a9aaa"/><rect x="3" y="9" width="1" height="1" fill="#5a95da"/><rect x="4" y="9" width="1" height="1" fill="#40908a"/><rect x="3" y="10" width="2" height="1" fill="#655ea8"/><rect x="4" y="11" width="2" height="1" fill="#655ea8"/><rect x="5" y="12" width="1" height="1" fill="#655ea8"/><rect x="2" y="9" width="1" height="1" fill="#5a95da"/><rect x="4" y="12" width="1" height="1" fill="#655ea8"/><rect x="5" y="13" width="1" height="1" fill="#655ea8"/><rect x="8" y="14" width="3" height="1" fill="#40908a"/><rect x="7" y="11" width="4" height="2" fill="#5a95da"/><rect x="7" y="13" width="3" height="1" fill="#5a95da"/><rect x="6" y="12" width="1" height="2" fill="#40908a"/><rect x="6" y="10" width="2" height="1" fill="#40908a"/><rect x="10" y="10" width="2" height="1" fill="#40908a"/><rect x="11" y="11" width="1" height="2" fill="#40908a"/><rect x="10" y="13" width="1" height="1" fill="#40908a"/></svg>
<div class="t" style="left:62.00px;top:176.84px;font-size:12px;transform:scaleX(0.895);color:#000;">REMOVE Structure:</div>
<div class="t" style="left:168.70px;top:176.84px;font-size:12px;transform:scaleX(0.91);color:#000;">Group = ALL</div>
<svg class="abs" style="left:42px;top:193px" width="16" height="16" viewBox="0 0 16 16" shape-rendering="crispEdges"><rect x="0" y="0" width="16" height="16" fill="#f0f0f0"/><rect x="2" y="1" width="2" height="1" fill="#000"/><rect x="12" y="1" width="3" height="1" fill="#000"/><rect x="14" y="1" width="1" height="4" fill="#000"/><rect x="14" y="11" width="1" height="4" fill="#000"/><rect x="12" y="14" width="3" height="1" fill="#000"/><rect x="2" y="14" width="2" height="1" fill="#000"/><rect x="5" y="3" width="1" height="4" fill="#655ea8"/><rect x="7" y="2" width="1" height="4" fill="#655ea8"/><rect x="9" y="2" width="1" height="5" fill="#655ea8"/><rect x="12" y="4" width="1" height="3" fill="#655ea8"/><rect x="5" y="6" width="8" height="1" fill="#655ea8"/><rect x="6" y="7" width="6" height="7" fill="#655ea8"/><rect x="9" y="3" width="1" height="1" fill="#40908a"/><rect x="12" y="5" width="1" height="1" fill="#40908a"/><rect x="6" y="6" width="1" height="1" fill="#5a95da"/><rect x="7" y="6" width="1" height="1" fill="#40908a"/><rect x="10" y="6" width="1" height="1" fill="#40908a"/><rect x="2" y="8" width="1" height="1" fill="#9a9aaa"/><rect x="3" y="9" width="1" height="1" fill="#5a95da"/><rect x="4" y="9" width="1" height="1" fill="#40908a"/><rect x="3" y="10" width="2" height="1" fill="#655ea8"/><rect x="4" y="11" width="2" height="1" fill="#655ea8"/><rect x="5" y="12" width="1" height="1" fill="#655ea8"/><rect x="2" y="9" width="1" height="1" fill="#5a95da"/><rect x="4" y="12" width="1" height="1" fill="#655ea8"/><rect x="5" y="13" width="1" height="1" fill="#655ea8"/><rect x="8" y="14" width="3" height="1" fill="#40908a"/><rect x="7" y="11" width="4" height="2" fill="#5a95da"/><rect x="7" y="13" width="3" height="1" fill="#5a95da"/><rect x="6" y="12" width="1" height="2" fill="#40908a"/><rect x="6" y="10" width="2" height="1" fill="#40908a"/><rect x="10" y="10" width="2" height="1" fill="#40908a"/><rect x="11" y="11" width="1" height="2" fill="#40908a"/><rect x="10" y="13" width="1" height="1" fill="#40908a"/></svg>
<div class="t" style="left:62.00px;top:192.84px;font-size:12px;transform:scaleX(0.9);color:#000;">LOAD Objects if Added:</div>
<div class="t" style="left:187.70px;top:192.84px;font-size:12px;transform:scaleX(0.9);color:#000;">Group = ALL;</div>
<div class="t" style="left:263.20px;top:192.84px;font-size:12px;transform:scaleX(0.92);color:#000;">Load Type = LOAD;</div>
<div class="t" style="left:370.20px;top:192.84px;font-size:12px;transform:scaleX(0.905);color:#000;">Load Name = NONE;</div>
<div class="t" style="left:482.50px;top:192.84px;font-size:12px;transform:scaleX(0.9);color:#000;">Scale Factor = 1</div>
<svg class="abs" style="left:8px;top:213px" width="9" height="9" viewBox="0 0 9 9" shape-rendering="crispEdges"><rect x="1" y="1" width="7" height="3" fill="#fdfdfd"/><rect x="1" y="4" width="7" height="2" fill="#f0f0f0"/><rect x="1" y="6" width="7" height="2" fill="#e2e2e2"/><rect x="1" y="0" width="7" height="1" fill="#8c8c8c"/><rect x="1" y="8" width="7" height="1" fill="#8c8c8c"/><rect x="0" y="1" width="1" height="7" fill="#8c8c8c"/><rect x="8" y="1" width="1" height="7" fill="#8c8c8c"/><rect x="0" y="0" width="1" height="1" fill="#c8c8c8"/><rect x="8" y="0" width="1" height="1" fill="#c8c8c8"/><rect x="0" y="8" width="1" height="1" fill="#c8c8c8"/><rect x="8" y="8" width="1" height="1" fill="#c8c8c8"/><rect x="2" y="4" width="5" height="1" fill="#3a4fa0"/><rect x="4" y="2" width="1" height="5" fill="#3a4fa0"/></svg>
<svg class="abs" style="left:23px;top:209px" width="16" height="16" viewBox="0 0 16 16" shape-rendering="crispEdges"><rect x="5" y="2" width="6" height="1" fill="#4a4a4a"/><rect x="4" y="3" width="2" height="4" fill="#4a4a4a"/><rect x="10" y="3" width="2" height="4" fill="#5a5a5a"/><rect x="4" y="3" width="1" height="1" fill="#9a9a9a"/><rect x="11" y="3" width="1" height="1" fill="#a0a0a0"/><rect x="5" y="2" width="1" height="1" fill="#8a8a8a"/><rect x="10" y="2" width="1" height="1" fill="#8a8a8a"/><rect x="5" y="3" width="1" height="1" fill="#3f7f78"/><rect x="10" y="3" width="1" height="1" fill="#3f7f78"/><rect x="9" y="2" width="1" height="1" fill="#2c7a70"/><rect x="4" y="5" width="1" height="1" fill="#2c7a70"/><rect x="6" y="3" width="1" height="1" fill="#7a70c8"/><rect x="3" y="7" width="10" height="7" fill="#2c7a70"/><rect x="4" y="8" width="1" height="5" fill="#1e5450"/><rect x="9" y="8" width="1" height="5" fill="#1e5450"/><rect x="6" y="9" width="2" height="4" fill="#3a2e86"/><rect x="10" y="8" width="1" height="5" fill="#8f84d0"/><rect x="11" y="8" width="1" height="5" fill="#4a7f90"/><rect x="3" y="7" width="10" height="1" fill="#3a3a3a"/><rect x="4" y="8" width="8" height="1" fill="#2f4f4c"/><rect x="3" y="13" width="10" height="1" fill="#2a2a2a"/></svg>
<div class="t" style="left:43.70px;top:208.84px;font-size:12px;transform:scaleX(0.915);color:#000;">STAGE 4:</div>
<div class="t" style="left:103.20px;top:208.84px;font-size:12px;transform:scaleX(0.895);color:#000;">Provide Output</div>
<svg class="abs" style="left:8px;top:229px" width="9" height="9" viewBox="0 0 9 9" shape-rendering="crispEdges"><rect x="1" y="1" width="7" height="3" fill="#fdfdfd"/><rect x="1" y="4" width="7" height="2" fill="#f0f0f0"/><rect x="1" y="6" width="7" height="2" fill="#e2e2e2"/><rect x="1" y="0" width="7" height="1" fill="#8c8c8c"/><rect x="1" y="8" width="7" height="1" fill="#8c8c8c"/><rect x="0" y="1" width="1" height="7" fill="#8c8c8c"/><rect x="8" y="1" width="1" height="7" fill="#8c8c8c"/><rect x="0" y="0" width="1" height="1" fill="#c8c8c8"/><rect x="8" y="0" width="1" height="1" fill="#c8c8c8"/><rect x="0" y="8" width="1" height="1" fill="#c8c8c8"/><rect x="8" y="8" width="1" height="1" fill="#c8c8c8"/><rect x="2" y="4" width="5" height="1" fill="#3a4fa0"/></svg>
<svg class="abs" style="left:23px;top:225px" width="16" height="16" viewBox="0 0 16 16" shape-rendering="crispEdges"><rect x="5" y="2" width="6" height="1" fill="#4a4a4a"/><rect x="4" y="3" width="2" height="4" fill="#4a4a4a"/><rect x="10" y="3" width="2" height="4" fill="#5a5a5a"/><rect x="4" y="3" width="1" height="1" fill="#9a9a9a"/><rect x="11" y="3" width="1" height="1" fill="#a0a0a0"/><rect x="5" y="2" width="1" height="1" fill="#8a8a8a"/><rect x="10" y="2" width="1" height="1" fill="#8a8a8a"/><rect x="5" y="3" width="1" height="1" fill="#3f7f78"/><rect x="10" y="3" width="1" height="1" fill="#3f7f78"/><rect x="9" y="2" width="1" height="1" fill="#2c7a70"/><rect x="4" y="5" width="1" height="1" fill="#2c7a70"/><rect x="6" y="3" width="1" height="1" fill="#7a70c8"/><rect x="3" y="7" width="10" height="7" fill="#2c7a70"/><rect x="4" y="8" width="1" height="5" fill="#1e5450"/><rect x="9" y="8" width="1" height="5" fill="#1e5450"/><rect x="6" y="9" width="2" height="4" fill="#3a2e86"/><rect x="10" y="8" width="1" height="5" fill="#8f84d0"/><rect x="11" y="8" width="1" height="5" fill="#4a7f90"/><rect x="3" y="7" width="10" height="1" fill="#3a3a3a"/><rect x="4" y="8" width="8" height="1" fill="#2f4f4c"/><rect x="3" y="13" width="10" height="1" fill="#2a2a2a"/></svg>
<div class="t" style="left:43.70px;top:224.84px;font-size:12px;transform:scaleX(0.915);color:#000;">STAGE 5:</div>
<div class="t" style="left:103.20px;top:224.84px;font-size:12px;transform:scaleX(0.895);color:#000;">Provide Output</div>
<svg class="abs" style="left:42px;top:241px" width="16" height="16" viewBox="0 0 16 16" shape-rendering="crispEdges"><rect x="0" y="0" width="16" height="16" fill="#f0f0f0"/><rect x="2" y="1" width="2" height="1" fill="#000"/><rect x="12" y="1" width="3" height="1" fill="#000"/><rect x="14" y="1" width="1" height="4" fill="#000"/><rect x="14" y="11" width="1" height="4" fill="#000"/><rect x="12" y="14" width="3" height="1" fill="#000"/><rect x="2" y="14" width="2" height="1" fill="#000"/><rect x="5" y="3" width="1" height="4" fill="#655ea8"/><rect x="7" y="2" width="1" height="4" fill="#655ea8"/><rect x="9" y="2" width="1" height="5" fill="#655ea8"/><rect x="12" y="4" width="1" height="3" fill="#655ea8"/><rect x="5" y="6" width="8" height="1" fill="#655ea8"/><rect x="6" y="7" width="6" height="7" fill="#655ea8"/><rect x="9" y="3" width="1" height="1" fill="#40908a"/><rect x="12" y="5" width="1" height="1" fill="#40908a"/><rect x="6" y="6" width="1" height="1" fill="#5a95da"/><rect x="7" y="6" width="1" height="1" fill="#40908a"/><rect x="10" y="6" width="1" height="1" fill="#40908a"/><rect x="2" y="8" width="1" height="1" fill="#9a9aaa"/><rect x="3" y="9" width="1" height="1" fill="#5a95da"/><rect x="4" y="9" width="1" height="1" fill="#40908a"/><rect x="3" y="10" width="2" height="1" fill="#655ea8"/><rect x="4" y="11" width="2" height="1" fill="#655ea8"/><rect x="5" y="12" width="1" height="1" fill="#655ea8"/><rect x="2" y="9" width="1" height="1" fill="#5a95da"/><rect x="4" y="12" width="1" height="1" fill="#655ea8"/><rect x="5" y="13" width="1" height="1" fill="#655ea8"/><rect x="8" y="14" width="3" height="1" fill="#40908a"/><rect x="7" y="11" width="4" height="2" fill="#5a95da"/><rect x="7" y="13" width="3" height="1" fill="#5a95da"/><rect x="6" y="12" width="1" height="2" fill="#40908a"/><rect x="6" y="10" width="2" height="1" fill="#40908a"/><rect x="10" y="10" width="2" height="1" fill="#40908a"/><rect x="11" y="11" width="1" height="2" fill="#40908a"/><rect x="10" y="13" width="1" height="1" fill="#40908a"/></svg>
<div class="t" style="left:62.50px;top:240.84px;font-size:12px;transform:scaleX(0.905);color:#000;">ADD Structure:</div>
<div class="t" style="left:146.20px;top:240.84px;font-size:12px;transform:scaleX(0.895);color:#000;">Story = B1</div>
<svg class="abs" style="left:42px;top:257px" width="16" height="16" viewBox="0 0 16 16" shape-rendering="crispEdges"><rect x="0" y="0" width="16" height="16" fill="#f0f0f0"/><rect x="2" y="1" width="2" height="1" fill="#000"/><rect x="12" y="1" width="3" height="1" fill="#000"/><rect x="14" y="1" width="1" height="4" fill="#000"/><rect x="14" y="11" width="1" height="4" fill="#000"/><rect x="12" y="14" width="3" height="1" fill="#000"/><rect x="2" y="14" width="2" height="1" fill="#000"/><rect x="5" y="3" width="1" height="4" fill="#655ea8"/><rect x="7" y="2" width="1" height="4" fill="#655ea8"/><rect x="9" y="2" width="1" height="5" fill="#655ea8"/><rect x="12" y="4" width="1" height="3" fill="#655ea8"/><rect x="5" y="6" width="8" height="1" fill="#655ea8"/><rect x="6" y="7" width="6" height="7" fill="#655ea8"/><rect x="9" y="3" width="1" height="1" fill="#40908a"/><rect x="12" y="5" width="1" height="1" fill="#40908a"/><rect x="6" y="6" width="1" height="1" fill="#5a95da"/><rect x="7" y="6" width="1" height="1" fill="#40908a"/><rect x="10" y="6" width="1" height="1" fill="#40908a"/><rect x="2" y="8" width="1" height="1" fill="#9a9aaa"/><rect x="3" y="9" width="1" height="1" fill="#5a95da"/><rect x="4" y="9" width="1" height="1" fill="#40908a"/><rect x="3" y="10" width="2" height="1" fill="#655ea8"/><rect x="4" y="11" width="2" height="1" fill="#655ea8"/><rect x="5" y="12" width="1" height="1" fill="#655ea8"/><rect x="2" y="9" width="1" height="1" fill="#5a95da"/><rect x="4" y="12" width="1" height="1" fill="#655ea8"/><rect x="5" y="13" width="1" height="1" fill="#655ea8"/><rect x="8" y="14" width="3" height="1" fill="#40908a"/><rect x="7" y="11" width="4" height="2" fill="#5a95da"/><rect x="7" y="13" width="3" height="1" fill="#5a95da"/><rect x="6" y="12" width="1" height="2" fill="#40908a"/><rect x="6" y="10" width="2" height="1" fill="#40908a"/><rect x="10" y="10" width="2" height="1" fill="#40908a"/><rect x="11" y="11" width="1" height="2" fill="#40908a"/><rect x="10" y="13" width="1" height="1" fill="#40908a"/></svg>
<div class="t" style="left:62.00px;top:256.84px;font-size:12px;transform:scaleX(0.895);color:#000;">REMOVE Structure:</div>
<div class="t" style="left:168.70px;top:256.84px;font-size:12px;transform:scaleX(0.91);color:#000;">Group = ALL</div>
<svg class="abs" style="left:42px;top:273px" width="16" height="16" viewBox="0 0 16 16" shape-rendering="crispEdges"><rect x="0" y="0" width="16" height="16" fill="#f0f0f0"/><rect x="2" y="1" width="2" height="1" fill="#000"/><rect x="12" y="1" width="3" height="1" fill="#000"/><rect x="14" y="1" width="1" height="4" fill="#000"/><rect x="14" y="11" width="1" height="4" fill="#000"/><rect x="12" y="14" width="3" height="1" fill="#000"/><rect x="2" y="14" width="2" height="1" fill="#000"/><rect x="5" y="3" width="1" height="4" fill="#655ea8"/><rect x="7" y="2" width="1" height="4" fill="#655ea8"/><rect x="9" y="2" width="1" height="5" fill="#655ea8"/><rect x="12" y="4" width="1" height="3" fill="#655ea8"/><rect x="5" y="6" width="8" height="1" fill="#655ea8"/><rect x="6" y="7" width="6" height="7" fill="#655ea8"/><rect x="9" y="3" width="1" height="1" fill="#40908a"/><rect x="12" y="5" width="1" height="1" fill="#40908a"/><rect x="6" y="6" width="1" height="1" fill="#5a95da"/><rect x="7" y="6" width="1" height="1" fill="#40908a"/><rect x="10" y="6" width="1" height="1" fill="#40908a"/><rect x="2" y="8" width="1" height="1" fill="#9a9aaa"/><rect x="3" y="9" width="1" height="1" fill="#5a95da"/><rect x="4" y="9" width="1" height="1" fill="#40908a"/><rect x="3" y="10" width="2" height="1" fill="#655ea8"/><rect x="4" y="11" width="2" height="1" fill="#655ea8"/><rect x="5" y="12" width="1" height="1" fill="#655ea8"/><rect x="2" y="9" width="1" height="1" fill="#5a95da"/><rect x="4" y="12" width="1" height="1" fill="#655ea8"/><rect x="5" y="13" width="1" height="1" fill="#655ea8"/><rect x="8" y="14" width="3" height="1" fill="#40908a"/><rect x="7" y="11" width="4" height="2" fill="#5a95da"/><rect x="7" y="13" width="3" height="1" fill="#5a95da"/><rect x="6" y="12" width="1" height="2" fill="#40908a"/><rect x="6" y="10" width="2" height="1" fill="#40908a"/><rect x="10" y="10" width="2" height="1" fill="#40908a"/><rect x="11" y="11" width="1" height="2" fill="#40908a"/><rect x="10" y="13" width="1" height="1" fill="#40908a"/></svg>
<div class="t" style="left:62.00px;top:272.84px;font-size:12px;transform:scaleX(0.9);color:#000;">LOAD Objects if Added:</div>
<div class="t" style="left:187.70px;top:272.84px;font-size:12px;transform:scaleX(0.9);color:#000;">Group = ALL;</div>
<div class="t" style="left:263.20px;top:272.84px;font-size:12px;transform:scaleX(0.92);color:#000;">Load Type = LOAD;</div>
<div class="t" style="left:370.20px;top:272.84px;font-size:12px;transform:scaleX(0.905);color:#000;">Load Name = NONE;</div>
<div class="t" style="left:482.50px;top:272.84px;font-size:12px;transform:scaleX(0.9);color:#000;">Scale Factor = 1</div>
<svg class="abs" style="left:8px;top:293px" width="9" height="9" viewBox="0 0 9 9" shape-rendering="crispEdges"><rect x="1" y="1" width="7" height="3" fill="#fdfdfd"/><rect x="1" y="4" width="7" height="2" fill="#f0f0f0"/><rect x="1" y="6" width="7" height="2" fill="#e2e2e2"/><rect x="1" y="0" width="7" height="1" fill="#8c8c8c"/><rect x="1" y="8" width="7" height="1" fill="#8c8c8c"/><rect x="0" y="1" width="1" height="7" fill="#8c8c8c"/><rect x="8" y="1" width="1" height="7" fill="#8c8c8c"/><rect x="0" y="0" width="1" height="1" fill="#c8c8c8"/><rect x="8" y="0" width="1" height="1" fill="#c8c8c8"/><rect x="0" y="8" width="1" height="1" fill="#c8c8c8"/><rect x="8" y="8" width="1" height="1" fill="#c8c8c8"/><rect x="2" y="4" width="5" height="1" fill="#3a4fa0"/><rect x="4" y="2" width="1" height="5" fill="#3a4fa0"/></svg>
<svg class="abs" style="left:23px;top:289px" width="16" height="16" viewBox="0 0 16 16" shape-rendering="crispEdges"><rect x="5" y="2" width="6" height="1" fill="#4a4a4a"/><rect x="4" y="3" width="2" height="4" fill="#4a4a4a"/><rect x="10" y="3" width="2" height="4" fill="#5a5a5a"/><rect x="4" y="3" width="1" height="1" fill="#9a9a9a"/><rect x="11" y="3" width="1" height="1" fill="#a0a0a0"/><rect x="5" y="2" width="1" height="1" fill="#8a8a8a"/><rect x="10" y="2" width="1" height="1" fill="#8a8a8a"/><rect x="5" y="3" width="1" height="1" fill="#3f7f78"/><rect x="10" y="3" width="1" height="1" fill="#3f7f78"/><rect x="9" y="2" width="1" height="1" fill="#2c7a70"/><rect x="4" y="5" width="1" height="1" fill="#2c7a70"/><rect x="6" y="3" width="1" height="1" fill="#7a70c8"/><rect x="3" y="7" width="10" height="7" fill="#2c7a70"/><rect x="4" y="8" width="1" height="5" fill="#1e5450"/><rect x="9" y="8" width="1" height="5" fill="#1e5450"/><rect x="6" y="9" width="2" height="4" fill="#3a2e86"/><rect x="10" y="8" width="1" height="5" fill="#8f84d0"/><rect x="11" y="8" width="1" height="5" fill="#4a7f90"/><rect x="3" y="7" width="10" height="1" fill="#3a3a3a"/><rect x="4" y="8" width="8" height="1" fill="#2f4f4c"/><rect x="3" y="13" width="10" height="1" fill="#2a2a2a"/></svg>
<div class="t" style="left:43.70px;top:288.84px;font-size:12px;transform:scaleX(0.915);color:#000;">STAGE 6:</div>
<div class="t" style="left:103.20px;top:288.84px;font-size:12px;transform:scaleX(0.895);color:#000;">Provide Output</div>
<svg class="abs" style="left:8px;top:309px" width="9" height="9" viewBox="0 0 9 9" shape-rendering="crispEdges"><rect x="1" y="1" width="7" height="3" fill="#fdfdfd"/><rect x="1" y="4" width="7" height="2" fill="#f0f0f0"/><rect x="1" y="6" width="7" height="2" fill="#e2e2e2"/><rect x="1" y="0" width="7" height="1" fill="#8c8c8c"/><rect x="1" y="8" width="7" height="1" fill="#8c8c8c"/><rect x="0" y="1" width="1" height="7" fill="#8c8c8c"/><rect x="8" y="1" width="1" height="7" fill="#8c8c8c"/><rect x="0" y="0" width="1" height="1" fill="#c8c8c8"/><rect x="8" y="0" width="1" height="1" fill="#c8c8c8"/><rect x="0" y="8" width="1" height="1" fill="#c8c8c8"/><rect x="8" y="8" width="1" height="1" fill="#c8c8c8"/><rect x="2" y="4" width="5" height="1" fill="#3a4fa0"/><rect x="4" y="2" width="1" height="5" fill="#3a4fa0"/></svg>
<svg class="abs" style="left:23px;top:305px" width="16" height="16" viewBox="0 0 16 16" shape-rendering="crispEdges"><rect x="5" y="2" width="6" height="1" fill="#4a4a4a"/><rect x="4" y="3" width="2" height="4" fill="#4a4a4a"/><rect x="10" y="3" width="2" height="4" fill="#5a5a5a"/><rect x="4" y="3" width="1" height="1" fill="#9a9a9a"/><rect x="11" y="3" width="1" height="1" fill="#a0a0a0"/><rect x="5" y="2" width="1" height="1" fill="#8a8a8a"/><rect x="10" y="2" width="1" height="1" fill="#8a8a8a"/><rect x="5" y="3" width="1" height="1" fill="#3f7f78"/><rect x="10" y="3" width="1" height="1" fill="#3f7f78"/><rect x="9" y="2" width="1" height="1" fill="#2c7a70"/><rect x="4" y="5" width="1" height="1" fill="#2c7a70"/><rect x="6" y="3" width="1" height="1" fill="#7a70c8"/><rect x="3" y="7" width="10" height="7" fill="#2c7a70"/><rect x="4" y="8" width="1" height="5" fill="#1e5450"/><rect x="9" y="8" width="1" height="5" fill="#1e5450"/><rect x="6" y="9" width="2" height="4" fill="#3a2e86"/><rect x="10" y="8" width="1" height="5" fill="#8f84d0"/><rect x="11" y="8" width="1" height="5" fill="#4a7f90"/><rect x="3" y="7" width="10" height="1" fill="#3a3a3a"/><rect x="4" y="8" width="8" height="1" fill="#2f4f4c"/><rect x="3" y="13" width="10" height="1" fill="#2a2a2a"/></svg>
<div class="t" style="left:43.70px;top:304.84px;font-size:12px;transform:scaleX(0.915);color:#000;">STAGE 7:</div>
<div class="t" style="left:103.20px;top:304.84px;font-size:12px;transform:scaleX(0.895);color:#000;">Provide Output</div>
<svg class="abs" style="left:8px;top:325px" width="9" height="9" viewBox="0 0 9 9" shape-rendering="crispEdges"><rect x="1" y="1" width="7" height="3" fill="#fdfdfd"/><rect x="1" y="4" width="7" height="2" fill="#f0f0f0"/><rect x="1" y="6" width="7" height="2" fill="#e2e2e2"/><rect x="1" y="0" width="7" height="1" fill="#8c8c8c"/><rect x="1" y="8" width="7" height="1" fill="#8c8c8c"/><rect x="0" y="1" width="1" height="7" fill="#8c8c8c"/><rect x="8" y="1" width="1" height="7" fill="#8c8c8c"/><rect x="0" y="0" width="1" height="1" fill="#c8c8c8"/><rect x="8" y="0" width="1" height="1" fill="#c8c8c8"/><rect x="0" y="8" width="1" height="1" fill="#c8c8c8"/><rect x="8" y="8" width="1" height="1" fill="#c8c8c8"/><rect x="2" y="4" width="5" height="1" fill="#3a4fa0"/></svg>
<svg class="abs" style="left:23px;top:321px" width="16" height="16" viewBox="0 0 16 16" shape-rendering="crispEdges"><rect x="5" y="2" width="6" height="1" fill="#4a4a4a"/><rect x="4" y="3" width="2" height="4" fill="#4a4a4a"/><rect x="10" y="3" width="2" height="4" fill="#5a5a5a"/><rect x="4" y="3" width="1" height="1" fill="#9a9a9a"/><rect x="11" y="3" width="1" height="1" fill="#a0a0a0"/><rect x="5" y="2" width="1" height="1" fill="#8a8a8a"/><rect x="10" y="2" width="1" height="1" fill="#8a8a8a"/><rect x="5" y="3" width="1" height="1" fill="#3f7f78"/><rect x="10" y="3" width="1" height="1" fill="#3f7f78"/><rect x="9" y="2" width="1" height="1" fill="#2c7a70"/><rect x="4" y="5" width="1" height="1" fill="#2c7a70"/><rect x="6" y="3" width="1" height="1" fill="#7a70c8"/><rect x="3" y="7" width="10" height="7" fill="#2c7a70"/><rect x="4" y="8" width="1" height="5" fill="#1e5450"/><rect x="9" y="8" width="1" height="5" fill="#1e5450"/><rect x="6" y="9" width="2" height="4" fill="#3a2e86"/><rect x="10" y="8" width="1" height="5" fill="#8f84d0"/><rect x="11" y="8" width="1" height="5" fill="#4a7f90"/><rect x="3" y="7" width="10" height="1" fill="#3a3a3a"/><rect x="4" y="8" width="8" height="1" fill="#2f4f4c"/><rect x="3" y="13" width="10" height="1" fill="#2a2a2a"/></svg>
<div class="t" style="left:43.70px;top:320.84px;font-size:12px;transform:scaleX(0.915);color:#000;">STAGE 8:</div>
<div class="t" style="left:103.20px;top:320.84px;font-size:12px;transform:scaleX(0.895);color:#000;">Provide Output</div>
<svg class="abs" style="left:42px;top:337px" width="16" height="16" viewBox="0 0 16 16" shape-rendering="crispEdges"><rect x="0" y="0" width="16" height="16" fill="#f0f0f0"/><rect x="2" y="1" width="2" height="1" fill="#000"/><rect x="12" y="1" width="3" height="1" fill="#000"/><rect x="14" y="1" width="1" height="4" fill="#000"/><rect x="14" y="11" width="1" height="4" fill="#000"/><rect x="12" y="14" width="3" height="1" fill="#000"/><rect x="2" y="14" width="2" height="1" fill="#000"/><rect x="5" y="3" width="1" height="4" fill="#655ea8"/><rect x="7" y="2" width="1" height="4" fill="#655ea8"/><rect x="9" y="2" width="1" height="5" fill="#655ea8"/><rect x="12" y="4" width="1" height="3" fill="#655ea8"/><rect x="5" y="6" width="8" height="1" fill="#655ea8"/><rect x="6" y="7" width="6" height="7" fill="#655ea8"/><rect x="9" y="3" width="1" height="1" fill="#40908a"/><rect x="12" y="5" width="1" height="1" fill="#40908a"/><rect x="6" y="6" width="1" height="1" fill="#5a95da"/><rect x="7" y="6" width="1" height="1" fill="#40908a"/><rect x="10" y="6" width="1" height="1" fill="#40908a"/><rect x="2" y="8" width="1" height="1" fill="#9a9aaa"/><rect x="3" y="9" width="1" height="1" fill="#5a95da"/><rect x="4" y="9" width="1" height="1" fill="#40908a"/><rect x="3" y="10" width="2" height="1" fill="#655ea8"/><rect x="4" y="11" width="2" height="1" fill="#655ea8"/><rect x="5" y="12" width="1" height="1" fill="#655ea8"/><rect x="2" y="9" width="1" height="1" fill="#5a95da"/><rect x="4" y="12" width="1" height="1" fill="#655ea8"/><rect x="5" y="13" width="1" height="1" fill="#655ea8"/><rect x="8" y="14" width="3" height="1" fill="#40908a"/><rect x="7" y="11" width="4" height="2" fill="#5a95da"/><rect x="7" y="13" width="3" height="1" fill="#5a95da"/><rect x="6" y="12" width="1" height="2" fill="#40908a"/><rect x="6" y="10" width="2" height="1" fill="#40908a"/><rect x="10" y="10" width="2" height="1" fill="#40908a"/><rect x="11" y="11" width="1" height="2" fill="#40908a"/><rect x="10" y="13" width="1" height="1" fill="#40908a"/></svg>
<div class="t" style="left:62.50px;top:336.84px;font-size:12px;transform:scaleX(0.905);color:#000;">ADD Structure:</div>
<div class="t" style="left:146.20px;top:336.84px;font-size:12px;transform:scaleX(0.895);color:#000;">Story = 3</div>
<svg class="abs" style="left:42px;top:353px" width="16" height="16" viewBox="0 0 16 16" shape-rendering="crispEdges"><rect x="0" y="0" width="16" height="16" fill="#f0f0f0"/><rect x="2" y="1" width="2" height="1" fill="#000"/><rect x="12" y="1" width="3" height="1" fill="#000"/><rect x="14" y="1" width="1" height="4" fill="#000"/><rect x="14" y="11" width="1" height="4" fill="#000"/><rect x="12" y="14" width="3" height="1" fill="#000"/><rect x="2" y="14" width="2" height="1" fill="#000"/><rect x="5" y="3" width="1" height="4" fill="#655ea8"/><rect x="7" y="2" width="1" height="4" fill="#655ea8"/><rect x="9" y="2" width="1" height="5" fill="#655ea8"/><rect x="12" y="4" width="1" height="3" fill="#655ea8"/><rect x="5" y="6" width="8" height="1" fill="#655ea8"/><rect x="6" y="7" width="6" height="7" fill="#655ea8"/><rect x="9" y="3" width="1" height="1" fill="#40908a"/><rect x="12" y="5" width="1" height="1" fill="#40908a"/><rect x="6" y="6" width="1" height="1" fill="#5a95da"/><rect x="7" y="6" width="1" height="1" fill="#40908a"/><rect x="10" y="6" width="1" height="1" fill="#40908a"/><rect x="2" y="8" width="1" height="1" fill="#9a9aaa"/><rect x="3" y="9" width="1" height="1" fill="#5a95da"/><rect x="4" y="9" width="1" height="1" fill="#40908a"/><rect x="3" y="10" width="2" height="1" fill="#655ea8"/><rect x="4" y="11" width="2" height="1" fill="#655ea8"/><rect x="5" y="12" width="1" height="1" fill="#655ea8"/><rect x="2" y="9" width="1" height="1" fill="#5a95da"/><rect x="4" y="12" width="1" height="1" fill="#655ea8"/><rect x="5" y="13" width="1" height="1" fill="#655ea8"/><rect x="8" y="14" width="3" height="1" fill="#40908a"/><rect x="7" y="11" width="4" height="2" fill="#5a95da"/><rect x="7" y="13" width="3" height="1" fill="#5a95da"/><rect x="6" y="12" width="1" height="2" fill="#40908a"/><rect x="6" y="10" width="2" height="1" fill="#40908a"/><rect x="10" y="10" width="2" height="1" fill="#40908a"/><rect x="11" y="11" width="1" height="2" fill="#40908a"/><rect x="10" y="13" width="1" height="1" fill="#40908a"/></svg>
<div class="t" style="left:62.00px;top:352.84px;font-size:12px;transform:scaleX(0.895);color:#000;">REMOVE Structure:</div>
<div class="t" style="left:168.70px;top:352.84px;font-size:12px;transform:scaleX(0.91);color:#000;">Group = ALL</div>
<svg class="abs" style="left:42px;top:369px" width="16" height="16" viewBox="0 0 16 16" shape-rendering="crispEdges"><rect x="0" y="0" width="16" height="16" fill="#f0f0f0"/><rect x="2" y="1" width="2" height="1" fill="#000"/><rect x="12" y="1" width="3" height="1" fill="#000"/><rect x="14" y="1" width="1" height="4" fill="#000"/><rect x="14" y="11" width="1" height="4" fill="#000"/><rect x="12" y="14" width="3" height="1" fill="#000"/><rect x="2" y="14" width="2" height="1" fill="#000"/><rect x="5" y="3" width="1" height="4" fill="#655ea8"/><rect x="7" y="2" width="1" height="4" fill="#655ea8"/><rect x="9" y="2" width="1" height="5" fill="#655ea8"/><rect x="12" y="4" width="1" height="3" fill="#655ea8"/><rect x="5" y="6" width="8" height="1" fill="#655ea8"/><rect x="6" y="7" width="6" height="7" fill="#655ea8"/><rect x="9" y="3" width="1" height="1" fill="#40908a"/><rect x="12" y="5" width="1" height="1" fill="#40908a"/><rect x="6" y="6" width="1" height="1" fill="#5a95da"/><rect x="7" y="6" width="1" height="1" fill="#40908a"/><rect x="10" y="6" width="1" height="1" fill="#40908a"/><rect x="2" y="8" width="1" height="1" fill="#9a9aaa"/><rect x="3" y="9" width="1" height="1" fill="#5a95da"/><rect x="4" y="9" width="1" height="1" fill="#40908a"/><rect x="3" y="10" width="2" height="1" fill="#655ea8"/><rect x="4" y="11" width="2" height="1" fill="#655ea8"/><rect x="5" y="12" width="1" height="1" fill="#655ea8"/><rect x="2" y="9" width="1" height="1" fill="#5a95da"/><rect x="4" y="12" width="1" height="1" fill="#655ea8"/><rect x="5" y="13" width="1" height="1" fill="#655ea8"/><rect x="8" y="14" width="3" height="1" fill="#40908a"/><rect x="7" y="11" width="4" height="2" fill="#5a95da"/><rect x="7" y="13" width="3" height="1" fill="#5a95da"/><rect x="6" y="12" width="1" height="2" fill="#40908a"/><rect x="6" y="10" width="2" height="1" fill="#40908a"/><rect x="10" y="10" width="2" height="1" fill="#40908a"/><rect x="11" y="11" width="1" height="2" fill="#40908a"/><rect x="10" y="13" width="1" height="1" fill="#40908a"/></svg>
<div class="t" style="left:62.00px;top:368.84px;font-size:12px;transform:scaleX(0.9);color:#000;">LOAD Objects if Added:</div>
<div class="t" style="left:187.70px;top:368.84px;font-size:12px;transform:scaleX(0.9);color:#000;">Group = ALL;</div>
<div class="t" style="left:263.20px;top:368.84px;font-size:12px;transform:scaleX(0.92);color:#000;">Load Type = LOAD;</div>
<div class="t" style="left:370.20px;top:368.84px;font-size:12px;transform:scaleX(0.905);color:#000;">Load Name = NONE;</div>
<div class="t" style="left:482.50px;top:368.84px;font-size:12px;transform:scaleX(0.9);color:#000;">Scale Factor = 1</div>
<svg class="abs" style="left:8px;top:389px" width="9" height="9" viewBox="0 0 9 9" shape-rendering="crispEdges"><rect x="1" y="1" width="7" height="3" fill="#fdfdfd"/><rect x="1" y="4" width="7" height="2" fill="#f0f0f0"/><rect x="1" y="6" width="7" height="2" fill="#e2e2e2"/><rect x="1" y="0" width="7" height="1" fill="#8c8c8c"/><rect x="1" y="8" width="7" height="1" fill="#8c8c8c"/><rect x="0" y="1" width="1" height="7" fill="#8c8c8c"/><rect x="8" y="1" width="1" height="7" fill="#8c8c8c"/><rect x="0" y="0" width="1" height="1" fill="#c8c8c8"/><rect x="8" y="0" width="1" height="1" fill="#c8c8c8"/><rect x="0" y="8" width="1" height="1" fill="#c8c8c8"/><rect x="8" y="8" width="1" height="1" fill="#c8c8c8"/><rect x="2" y="4" width="5" height="1" fill="#3a4fa0"/><rect x="4" y="2" width="1" height="5" fill="#3a4fa0"/></svg>
<svg class="abs" style="left:23px;top:385px" width="16" height="16" viewBox="0 0 16 16" shape-rendering="crispEdges"><rect x="5" y="2" width="6" height="1" fill="#4a4a4a"/><rect x="4" y="3" width="2" height="4" fill="#4a4a4a"/><rect x="10" y="3" width="2" height="4" fill="#5a5a5a"/><rect x="4" y="3" width="1" height="1" fill="#9a9a9a"/><rect x="11" y="3" width="1" height="1" fill="#a0a0a0"/><rect x="5" y="2" width="1" height="1" fill="#8a8a8a"/><rect x="10" y="2" width="1" height="1" fill="#8a8a8a"/><rect x="5" y="3" width="1" height="1" fill="#3f7f78"/><rect x="10" y="3" width="1" height="1" fill="#3f7f78"/><rect x="9" y="2" width="1" height="1" fill="#2c7a70"/><rect x="4" y="5" width="1" height="1" fill="#2c7a70"/><rect x="6" y="3" width="1" height="1" fill="#7a70c8"/><rect x="3" y="7" width="10" height="7" fill="#2c7a70"/><rect x="4" y="8" width="1" height="5" fill="#1e5450"/><rect x="9" y="8" width="1" height="5" fill="#1e5450"/><rect x="6" y="9" width="2" height="4" fill="#3a2e86"/><rect x="10" y="8" width="1" height="5" fill="#8f84d0"/><rect x="11" y="8" width="1" height="5" fill="#4a7f90"/><rect x="3" y="7" width="10" height="1" fill="#3a3a3a"/><rect x="4" y="8" width="8" height="1" fill="#2f4f4c"/><rect x="3" y="13" width="10" height="1" fill="#2a2a2a"/></svg>
<div class="t" style="left:43.70px;top:384.84px;font-size:12px;transform:scaleX(0.915);color:#000;">STAGE 9:</div>
<div class="t" style="left:103.20px;top:384.84px;font-size:12px;transform:scaleX(0.895);color:#000;">Provide Output</div>
<svg class="abs" style="left:8px;top:405px" width="9" height="9" viewBox="0 0 9 9" shape-rendering="crispEdges"><rect x="1" y="1" width="7" height="3" fill="#fdfdfd"/><rect x="1" y="4" width="7" height="2" fill="#f0f0f0"/><rect x="1" y="6" width="7" height="2" fill="#e2e2e2"/><rect x="1" y="0" width="7" height="1" fill="#8c8c8c"/><rect x="1" y="8" width="7" height="1" fill="#8c8c8c"/><rect x="0" y="1" width="1" height="7" fill="#8c8c8c"/><rect x="8" y="1" width="1" height="7" fill="#8c8c8c"/><rect x="0" y="0" width="1" height="1" fill="#c8c8c8"/><rect x="8" y="0" width="1" height="1" fill="#c8c8c8"/><rect x="0" y="8" width="1" height="1" fill="#c8c8c8"/><rect x="8" y="8" width="1" height="1" fill="#c8c8c8"/><rect x="2" y="4" width="5" height="1" fill="#3a4fa0"/></svg>
<svg class="abs" style="left:23px;top:401px" width="16" height="16" viewBox="0 0 16 16" shape-rendering="crispEdges"><rect x="5" y="2" width="6" height="1" fill="#4a4a4a"/><rect x="4" y="3" width="2" height="4" fill="#4a4a4a"/><rect x="10" y="3" width="2" height="4" fill="#5a5a5a"/><rect x="4" y="3" width="1" height="1" fill="#9a9a9a"/><rect x="11" y="3" width="1" height="1" fill="#a0a0a0"/><rect x="5" y="2" width="1" height="1" fill="#8a8a8a"/><rect x="10" y="2" width="1" height="1" fill="#8a8a8a"/><rect x="5" y="3" width="1" height="1" fill="#3f7f78"/><rect x="10" y="3" width="1" height="1" fill="#3f7f78"/><rect x="9" y="2" width="1" height="1" fill="#2c7a70"/><rect x="4" y="5" width="1" height="1" fill="#2c7a70"/><rect x="6" y="3" width="1" height="1" fill="#7a70c8"/><rect x="3" y="7" width="10" height="7" fill="#2c7a70"/><rect x="4" y="8" width="1" height="5" fill="#1e5450"/><rect x="9" y="8" width="1" height="5" fill="#1e5450"/><rect x="6" y="9" width="2" height="4" fill="#3a2e86"/><rect x="10" y="8" width="1" height="5" fill="#8f84d0"/><rect x="11" y="8" width="1" height="5" fill="#4a7f90"/><rect x="3" y="7" width="10" height="1" fill="#3a3a3a"/><rect x="4" y="8" width="8" height="1" fill="#2f4f4c"/><rect x="3" y="13" width="10" height="1" fill="#2a2a2a"/></svg>
<div class="t" style="left:43.70px;top:400.84px;font-size:12px;transform:scaleX(0.915);color:#000;">STAGE 10:</div>
<div class="t" style="left:109.20px;top:400.84px;font-size:12px;transform:scaleX(0.895);color:#000;">Provide Output</div>
<svg class="abs" style="left:42px;top:417px" width="16" height="16" viewBox="0 0 16 16" shape-rendering="crispEdges"><rect x="0" y="0" width="16" height="16" fill="#f0f0f0"/><rect x="2" y="1" width="2" height="1" fill="#000"/><rect x="12" y="1" width="3" height="1" fill="#000"/><rect x="14" y="1" width="1" height="4" fill="#000"/><rect x="14" y="11" width="1" height="4" fill="#000"/><rect x="12" y="14" width="3" height="1" fill="#000"/><rect x="2" y="14" width="2" height="1" fill="#000"/><rect x="5" y="3" width="1" height="4" fill="#655ea8"/><rect x="7" y="2" width="1" height="4" fill="#655ea8"/><rect x="9" y="2" width="1" height="5" fill="#655ea8"/><rect x="12" y="4" width="1" height="3" fill="#655ea8"/><rect x="5" y="6" width="8" height="1" fill="#655ea8"/><rect x="6" y="7" width="6" height="7" fill="#655ea8"/><rect x="9" y="3" width="1" height="1" fill="#40908a"/><rect x="12" y="5" width="1" height="1" fill="#40908a"/><rect x="6" y="6" width="1" height="1" fill="#5a95da"/><rect x="7" y="6" width="1" height="1" fill="#40908a"/><rect x="10" y="6" width="1" height="1" fill="#40908a"/><rect x="2" y="8" width="1" height="1" fill="#9a9aaa"/><rect x="3" y="9" width="1" height="1" fill="#5a95da"/><rect x="4" y="9" width="1" height="1" fill="#40908a"/><rect x="3" y="10" width="2" height="1" fill="#655ea8"/><rect x="4" y="11" width="2" height="1" fill="#655ea8"/><rect x="5" y="12" width="1" height="1" fill="#655ea8"/><rect x="2" y="9" width="1" height="1" fill="#5a95da"/><rect x="4" y="12" width="1" height="1" fill="#655ea8"/><rect x="5" y="13" width="1" height="1" fill="#655ea8"/><rect x="8" y="14" width="3" height="1" fill="#40908a"/><rect x="7" y="11" width="4" height="2" fill="#5a95da"/><rect x="7" y="13" width="3" height="1" fill="#5a95da"/><rect x="6" y="12" width="1" height="2" fill="#40908a"/><rect x="6" y="10" width="2" height="1" fill="#40908a"/><rect x="10" y="10" width="2" height="1" fill="#40908a"/><rect x="11" y="11" width="1" height="2" fill="#40908a"/><rect x="10" y="13" width="1" height="1" fill="#40908a"/></svg>
<div class="t" style="left:62.50px;top:416.84px;font-size:12px;transform:scaleX(0.905);color:#000;">ADD Structure:</div>
<div class="t" style="left:146.20px;top:416.84px;font-size:12px;transform:scaleX(0.895);color:#000;">Story = 2</div>
<svg class="abs" style="left:42px;top:433px" width="16" height="16" viewBox="0 0 16 16" shape-rendering="crispEdges"><rect x="0" y="0" width="16" height="16" fill="#f0f0f0"/><rect x="2" y="1" width="2" height="1" fill="#000"/><rect x="12" y="1" width="3" height="1" fill="#000"/><rect x="14" y="1" width="1" height="4" fill="#000"/><rect x="14" y="11" width="1" height="4" fill="#000"/><rect x="12" y="14" width="3" height="1" fill="#000"/><rect x="2" y="14" width="2" height="1" fill="#000"/><rect x="5" y="3" width="1" height="4" fill="#655ea8"/><rect x="7" y="2" width="1" height="4" fill="#655ea8"/><rect x="9" y="2" width="1" height="5" fill="#655ea8"/><rect x="12" y="4" width="1" height="3" fill="#655ea8"/><rect x="5" y="6" width="8" height="1" fill="#655ea8"/><rect x="6" y="7" width="6" height="7" fill="#655ea8"/><rect x="9" y="3" width="1" height="1" fill="#40908a"/><rect x="12" y="5" width="1" height="1" fill="#40908a"/><rect x="6" y="6" width="1" height="1" fill="#5a95da"/><rect x="7" y="6" width="1" height="1" fill="#40908a"/><rect x="10" y="6" width="1" height="1" fill="#40908a"/><rect x="2" y="8" width="1" height="1" fill="#9a9aaa"/><rect x="3" y="9" width="1" height="1" fill="#5a95da"/><rect x="4" y="9" width="1" height="1" fill="#40908a"/><rect x="3" y="10" width="2" height="1" fill="#655ea8"/><rect x="4" y="11" width="2" height="1" fill="#655ea8"/><rect x="5" y="12" width="1" height="1" fill="#655ea8"/><rect x="2" y="9" width="1" height="1" fill="#5a95da"/><rect x="4" y="12" width="1" height="1" fill="#655ea8"/><rect x="5" y="13" width="1" height="1" fill="#655ea8"/><rect x="8" y="14" width="3" height="1" fill="#40908a"/><rect x="7" y="11" width="4" height="2" fill="#5a95da"/><rect x="7" y="13" width="3" height="1" fill="#5a95da"/><rect x="6" y="12" width="1" height="2" fill="#40908a"/><rect x="6" y="10" width="2" height="1" fill="#40908a"/><rect x="10" y="10" width="2" height="1" fill="#40908a"/><rect x="11" y="11" width="1" height="2" fill="#40908a"/><rect x="10" y="13" width="1" height="1" fill="#40908a"/></svg>
<div class="t" style="left:62.00px;top:432.84px;font-size:12px;transform:scaleX(0.895);color:#000;">REMOVE Structure:</div>
<div class="t" style="left:168.70px;top:432.84px;font-size:12px;transform:scaleX(0.91);color:#000;">Group = ALL</div>
<svg class="abs" style="left:42px;top:449px" width="16" height="16" viewBox="0 0 16 16" shape-rendering="crispEdges"><rect x="0" y="0" width="16" height="16" fill="#f0f0f0"/><rect x="2" y="1" width="2" height="1" fill="#000"/><rect x="12" y="1" width="3" height="1" fill="#000"/><rect x="14" y="1" width="1" height="4" fill="#000"/><rect x="14" y="11" width="1" height="4" fill="#000"/><rect x="12" y="14" width="3" height="1" fill="#000"/><rect x="2" y="14" width="2" height="1" fill="#000"/><rect x="5" y="3" width="1" height="4" fill="#655ea8"/><rect x="7" y="2" width="1" height="4" fill="#655ea8"/><rect x="9" y="2" width="1" height="5" fill="#655ea8"/><rect x="12" y="4" width="1" height="3" fill="#655ea8"/><rect x="5" y="6" width="8" height="1" fill="#655ea8"/><rect x="6" y="7" width="6" height="7" fill="#655ea8"/><rect x="9" y="3" width="1" height="1" fill="#40908a"/><rect x="12" y="5" width="1" height="1" fill="#40908a"/><rect x="6" y="6" width="1" height="1" fill="#5a95da"/><rect x="7" y="6" width="1" height="1" fill="#40908a"/><rect x="10" y="6" width="1" height="1" fill="#40908a"/><rect x="2" y="8" width="1" height="1" fill="#9a9aaa"/><rect x="3" y="9" width="1" height="1" fill="#5a95da"/><rect x="4" y="9" width="1" height="1" fill="#40908a"/><rect x="3" y="10" width="2" height="1" fill="#655ea8"/><rect x="4" y="11" width="2" height="1" fill="#655ea8"/><rect x="5" y="12" width="1" height="1" fill="#655ea8"/><rect x="2" y="9" width="1" height="1" fill="#5a95da"/><rect x="4" y="12" width="1" height="1" fill="#655ea8"/><rect x="5" y="13" width="1" height="1" fill="#655ea8"/><rect x="8" y="14" width="3" height="1" fill="#40908a"/><rect x="7" y="11" width="4" height="2" fill="#5a95da"/><rect x="7" y="13" width="3" height="1" fill="#5a95da"/><rect x="6" y="12" width="1" height="2" fill="#40908a"/><rect x="6" y="10" width="2" height="1" fill="#40908a"/><rect x="10" y="10" width="2" height="1" fill="#40908a"/><rect x="11" y="11" width="1" height="2" fill="#40908a"/><rect x="10" y="13" width="1" height="1" fill="#40908a"/></svg>
<div class="t" style="left:62.00px;top:448.84px;font-size:12px;transform:scaleX(0.9);color:#000;">LOAD Objects if Added:</div>
<div class="t" style="left:187.70px;top:448.84px;font-size:12px;transform:scaleX(0.9);color:#000;">Group = ALL;</div>
<div class="t" style="left:263.20px;top:448.84px;font-size:12px;transform:scaleX(0.92);color:#000;">Load Type = LOAD;</div>
<div class="t" style="left:370.20px;top:448.84px;font-size:12px;transform:scaleX(0.905);color:#000;">Load Name = NONE;</div>
<div class="t" style="left:482.50px;top:448.84px;font-size:12px;transform:scaleX(0.9);color:#000;">Scale Factor = 1</div>
<svg class="abs" style="left:8px;top:469px" width="9" height="9" viewBox="0 0 9 9" shape-rendering="crispEdges"><rect x="1" y="1" width="7" height="3" fill="#fdfdfd"/><rect x="1" y="4" width="7" height="2" fill="#f0f0f0"/><rect x="1" y="6" width="7" height="2" fill="#e2e2e2"/><rect x="1" y="0" width="7" height="1" fill="#8c8c8c"/><rect x="1" y="8" width="7" height="1" fill="#8c8c8c"/><rect x="0" y="1" width="1" height="7" fill="#8c8c8c"/><rect x="8" y="1" width="1" height="7" fill="#8c8c8c"/><rect x="0" y="0" width="1" height="1" fill="#c8c8c8"/><rect x="8" y="0" width="1" height="1" fill="#c8c8c8"/><rect x="0" y="8" width="1" height="1" fill="#c8c8c8"/><rect x="8" y="8" width="1" height="1" fill="#c8c8c8"/><rect x="2" y="4" width="5" height="1" fill="#3a4fa0"/><rect x="4" y="2" width="1" height="5" fill="#3a4fa0"/></svg>
<svg class="abs" style="left:23px;top:465px" width="16" height="16" viewBox="0 0 16 16" shape-rendering="crispEdges"><rect x="5" y="2" width="6" height="1" fill="#4a4a4a"/><rect x="4" y="3" width="2" height="4" fill="#4a4a4a"/><rect x="10" y="3" width="2" height="4" fill="#5a5a5a"/><rect x="4" y="3" width="1" height="1" fill="#9a9a9a"/><rect x="11" y="3" width="1" height="1" fill="#a0a0a0"/><rect x="5" y="2" width="1" height="1" fill="#8a8a8a"/><rect x="10" y="2" width="1" height="1" fill="#8a8a8a"/><rect x="5" y="3" width="1" height="1" fill="#3f7f78"/><rect x="10" y="3" width="1" height="1" fill="#3f7f78"/><rect x="9" y="2" width="1" height="1" fill="#2c7a70"/><rect x="4" y="5" width="1" height="1" fill="#2c7a70"/><rect x="6" y="3" width="1" height="1" fill="#7a70c8"/><rect x="3" y="7" width="10" height="7" fill="#2c7a70"/><rect x="4" y="8" width="1" height="5" fill="#1e5450"/><rect x="9" y="8" width="1" height="5" fill="#1e5450"/><rect x="6" y="9" width="2" height="4" fill="#3a2e86"/><rect x="10" y="8" width="1" height="5" fill="#8f84d0"/><rect x="11" y="8" width="1" height="5" fill="#4a7f90"/><rect x="3" y="7" width="10" height="1" fill="#3a3a3a"/><rect x="4" y="8" width="8" height="1" fill="#2f4f4c"/><rect x="3" y="13" width="10" height="1" fill="#2a2a2a"/></svg>
<div class="t" style="left:43.70px;top:464.84px;font-size:12px;transform:scaleX(0.915);color:#000;">STAGE 11:</div>
<div class="t" style="left:109.20px;top:464.84px;font-size:12px;transform:scaleX(0.895);color:#000;">Provide Output</div>
<svg class="abs" style="left:8px;top:485px" width="9" height="9" viewBox="0 0 9 9" shape-rendering="crispEdges"><rect x="1" y="1" width="7" height="3" fill="#fdfdfd"/><rect x="1" y="4" width="7" height="2" fill="#f0f0f0"/><rect x="1" y="6" width="7" height="2" fill="#e2e2e2"/><rect x="1" y="0" width="7" height="1" fill="#8c8c8c"/><rect x="1" y="8" width="7" height="1" fill="#8c8c8c"/><rect x="0" y="1" width="1" height="7" fill="#8c8c8c"/><rect x="8" y="1" width="1" height="7" fill="#8c8c8c"/><rect x="0" y="0" width="1" height="1" fill="#c8c8c8"/><rect x="8" y="0" width="1" height="1" fill="#c8c8c8"/><rect x="0" y="8" width="1" height="1" fill="#c8c8c8"/><rect x="8" y="8" width="1" height="1" fill="#c8c8c8"/><rect x="2" y="4" width="5" height="1" fill="#3a4fa0"/><rect x="4" y="2" width="1" height="5" fill="#3a4fa0"/></svg>
<svg class="abs" style="left:23px;top:481px" width="16" height="16" viewBox="0 0 16 16" shape-rendering="crispEdges"><rect x="5" y="2" width="6" height="1" fill="#4a4a4a"/><rect x="4" y="3" width="2" height="4" fill="#4a4a4a"/><rect x="10" y="3" width="2" height="4" fill="#5a5a5a"/><rect x="4" y="3" width="1" height="1" fill="#9a9a9a"/><rect x="11" y="3" width="1" height="1" fill="#a0a0a0"/><rect x="5" y="2" width="1" height="1" fill="#8a8a8a"/><rect x="10" y="2" width="1" height="1" fill="#8a8a8a"/><rect x="5" y="3" width="1" height="1" fill="#3f7f78"/><rect x="10" y="3" width="1" height="1" fill="#3f7f78"/><rect x="9" y="2" width="1" height="1" fill="#2c7a70"/><rect x="4" y="5" width="1" height="1" fill="#2c7a70"/><rect x="6" y="3" width="1" height="1" fill="#7a70c8"/><rect x="3" y="7" width="10" height="7" fill="#2c7a70"/><rect x="4" y="8" width="1" height="5" fill="#1e5450"/><rect x="9" y="8" width="1" height="5" fill="#1e5450"/><rect x="6" y="9" width="2" height="4" fill="#3a2e86"/><rect x="10" y="8" width="1" height="5" fill="#8f84d0"/><rect x="11" y="8" width="1" height="5" fill="#4a7f90"/><rect x="3" y="7" width="10" height="1" fill="#3a3a3a"/><rect x="4" y="8" width="8" height="1" fill="#2f4f4c"/><rect x="3" y="13" width="10" height="1" fill="#2a2a2a"/></svg>
<div class="t" style="left:43.70px;top:480.84px;font-size:12px;transform:scaleX(0.915);color:#000;">STAGE 12:</div>
<div class="t" style="left:109.20px;top:480.84px;font-size:12px;transform:scaleX(0.895);color:#000;">Provide Output</div>
<svg class="abs" style="left:8px;top:501px" width="9" height="9" viewBox="0 0 9 9" shape-rendering="crispEdges"><rect x="1" y="1" width="7" height="3" fill="#fdfdfd"/><rect x="1" y="4" width="7" height="2" fill="#f0f0f0"/><rect x="1" y="6" width="7" height="2" fill="#e2e2e2"/><rect x="1" y="0" width="7" height="1" fill="#8c8c8c"/><rect x="1" y="8" width="7" height="1" fill="#8c8c8c"/><rect x="0" y="1" width="1" height="7" fill="#8c8c8c"/><rect x="8" y="1" width="1" height="7" fill="#8c8c8c"/><rect x="0" y="0" width="1" height="1" fill="#c8c8c8"/><rect x="8" y="0" width="1" height="1" fill="#c8c8c8"/><rect x="0" y="8" width="1" height="1" fill="#c8c8c8"/><rect x="8" y="8" width="1" height="1" fill="#c8c8c8"/><rect x="2" y="4" width="5" height="1" fill="#3a4fa0"/><rect x="4" y="2" width="1" height="5" fill="#3a4fa0"/></svg>
<svg class="abs" style="left:23px;top:497px" width="16" height="16" viewBox="0 0 16 16" shape-rendering="crispEdges"><rect x="5" y="2" width="6" height="1" fill="#4a4a4a"/><rect x="4" y="3" width="2" height="4" fill="#4a4a4a"/><rect x="10" y="3" width="2" height="4" fill="#5a5a5a"/><rect x="4" y="3" width="1" height="1" fill="#9a9a9a"/><rect x="11" y="3" width="1" height="1" fill="#a0a0a0"/><rect x="5" y="2" width="1" height="1" fill="#8a8a8a"/><rect x="10" y="2" width="1" height="1" fill="#8a8a8a"/><rect x="5" y="3" width="1" height="1" fill="#3f7f78"/><rect x="10" y="3" width="1" height="1" fill="#3f7f78"/><rect x="9" y="2" width="1" height="1" fill="#2c7a70"/><rect x="4" y="5" width="1" height="1" fill="#2c7a70"/><rect x="6" y="3" width="1" height="1" fill="#7a70c8"/><rect x="3" y="7" width="10" height="7" fill="#2c7a70"/><rect x="4" y="8" width="1" height="5" fill="#1e5450"/><rect x="9" y="8" width="1" height="5" fill="#1e5450"/><rect x="6" y="9" width="2" height="4" fill="#3a2e86"/><rect x="10" y="8" width="1" height="5" fill="#8f84d0"/><rect x="11" y="8" width="1" height="5" fill="#4a7f90"/><rect x="3" y="7" width="10" height="1" fill="#3a3a3a"/><rect x="4" y="8" width="8" height="1" fill="#2f4f4c"/><rect x="3" y="13" width="10" height="1" fill="#2a2a2a"/></svg>
<div class="t" style="left:43.70px;top:496.84px;font-size:12px;transform:scaleX(0.915);color:#000;">STAGE 13:</div>
<div class="t" style="left:109.20px;top:496.84px;font-size:12px;transform:scaleX(0.895);color:#000;">Provide Output</div>
<svg class="abs" style="left:8px;top:517px" width="9" height="9" viewBox="0 0 9 9" shape-rendering="crispEdges"><rect x="1" y="1" width="7" height="3" fill="#fdfdfd"/><rect x="1" y="4" width="7" height="2" fill="#f0f0f0"/><rect x="1" y="6" width="7" height="2" fill="#e2e2e2"/><rect x="1" y="0" width="7" height="1" fill="#8c8c8c"/><rect x="1" y="8" width="7" height="1" fill="#8c8c8c"/><rect x="0" y="1" width="1" height="7" fill="#8c8c8c"/><rect x="8" y="1" width="1" height="7" fill="#8c8c8c"/><rect x="0" y="0" width="1" height="1" fill="#c8c8c8"/><rect x="8" y="0" width="1" height="1" fill="#c8c8c8"/><rect x="0" y="8" width="1" height="1" fill="#c8c8c8"/><rect x="8" y="8" width="1" height="1" fill="#c8c8c8"/><rect x="2" y="4" width="5" height="1" fill="#3a4fa0"/></svg>
<svg class="abs" style="left:23px;top:513px" width="16" height="16" viewBox="0 0 16 16" shape-rendering="crispEdges"><rect x="5" y="2" width="6" height="1" fill="#4a4a4a"/><rect x="4" y="3" width="2" height="4" fill="#4a4a4a"/><rect x="10" y="3" width="2" height="4" fill="#5a5a5a"/><rect x="4" y="3" width="1" height="1" fill="#9a9a9a"/><rect x="11" y="3" width="1" height="1" fill="#a0a0a0"/><rect x="5" y="2" width="1" height="1" fill="#8a8a8a"/><rect x="10" y="2" width="1" height="1" fill="#8a8a8a"/><rect x="5" y="3" width="1" height="1" fill="#3f7f78"/><rect x="10" y="3" width="1" height="1" fill="#3f7f78"/><rect x="9" y="2" width="1" height="1" fill="#2c7a70"/><rect x="4" y="5" width="1" height="1" fill="#2c7a70"/><rect x="6" y="3" width="1" height="1" fill="#7a70c8"/><rect x="3" y="7" width="10" height="7" fill="#2c7a70"/><rect x="4" y="8" width="1" height="5" fill="#1e5450"/><rect x="9" y="8" width="1" height="5" fill="#1e5450"/><rect x="6" y="9" width="2" height="4" fill="#3a2e86"/><rect x="10" y="8" width="1" height="5" fill="#8f84d0"/><rect x="11" y="8" width="1" height="5" fill="#4a7f90"/><rect x="3" y="7" width="10" height="1" fill="#3a3a3a"/><rect x="4" y="8" width="8" height="1" fill="#2f4f4c"/><rect x="3" y="13" width="10" height="1" fill="#2a2a2a"/></svg>
<div class="t" style="left:43.70px;top:512.84px;font-size:12px;transform:scaleX(0.915);color:#000;">STAGE 14:</div>
<div class="t" style="left:109.20px;top:512.84px;font-size:12px;transform:scaleX(0.895);color:#000;">Provide Output</div>
<svg class="abs" style="left:42px;top:529px" width="16" height="16" viewBox="0 0 16 16" shape-rendering="crispEdges"><rect x="0" y="0" width="16" height="16" fill="#f0f0f0"/><rect x="2" y="1" width="2" height="1" fill="#000"/><rect x="12" y="1" width="3" height="1" fill="#000"/><rect x="14" y="1" width="1" height="4" fill="#000"/><rect x="14" y="11" width="1" height="4" fill="#000"/><rect x="12" y="14" width="3" height="1" fill="#000"/><rect x="2" y="14" width="2" height="1" fill="#000"/><rect x="5" y="3" width="1" height="4" fill="#655ea8"/><rect x="7" y="2" width="1" height="4" fill="#655ea8"/><rect x="9" y="2" width="1" height="5" fill="#655ea8"/><rect x="12" y="4" width="1" height="3" fill="#655ea8"/><rect x="5" y="6" width="8" height="1" fill="#655ea8"/><rect x="6" y="7" width="6" height="7" fill="#655ea8"/><rect x="9" y="3" width="1" height="1" fill="#40908a"/><rect x="12" y="5" width="1" height="1" fill="#40908a"/><rect x="6" y="6" width="1" height="1" fill="#5a95da"/><rect x="7" y="6" width="1" height="1" fill="#40908a"/><rect x="10" y="6" width="1" height="1" fill="#40908a"/><rect x="2" y="8" width="1" height="1" fill="#9a9aaa"/><rect x="3" y="9" width="1" height="1" fill="#5a95da"/><rect x="4" y="9" width="1" height="1" fill="#40908a"/><rect x="3" y="10" width="2" height="1" fill="#655ea8"/><rect x="4" y="11" width="2" height="1" fill="#655ea8"/><rect x="5" y="12" width="1" height="1" fill="#655ea8"/><rect x="2" y="9" width="1" height="1" fill="#5a95da"/><rect x="4" y="12" width="1" height="1" fill="#655ea8"/><rect x="5" y="13" width="1" height="1" fill="#655ea8"/><rect x="8" y="14" width="3" height="1" fill="#40908a"/><rect x="7" y="11" width="4" height="2" fill="#5a95da"/><rect x="7" y="13" width="3" height="1" fill="#5a95da"/><rect x="6" y="12" width="1" height="2" fill="#40908a"/><rect x="6" y="10" width="2" height="1" fill="#40908a"/><rect x="10" y="10" width="2" height="1" fill="#40908a"/><rect x="11" y="11" width="1" height="2" fill="#40908a"/><rect x="10" y="13" width="1" height="1" fill="#40908a"/></svg>
<div class="t" style="left:62.50px;top:528.84px;font-size:12px;transform:scaleX(0.905);color:#000;">ADD Structure:</div>
<div class="t" style="left:146.20px;top:528.84px;font-size:12px;transform:scaleX(0.895);color:#000;">Story = 1</div>
<svg class="abs" style="left:42px;top:545px" width="16" height="16" viewBox="0 0 16 16" shape-rendering="crispEdges"><rect x="0" y="0" width="16" height="16" fill="#f0f0f0"/><rect x="2" y="1" width="2" height="1" fill="#000"/><rect x="12" y="1" width="3" height="1" fill="#000"/><rect x="14" y="1" width="1" height="4" fill="#000"/><rect x="14" y="11" width="1" height="4" fill="#000"/><rect x="12" y="14" width="3" height="1" fill="#000"/><rect x="2" y="14" width="2" height="1" fill="#000"/><rect x="5" y="3" width="1" height="4" fill="#655ea8"/><rect x="7" y="2" width="1" height="4" fill="#655ea8"/><rect x="9" y="2" width="1" height="5" fill="#655ea8"/><rect x="12" y="4" width="1" height="3" fill="#655ea8"/><rect x="5" y="6" width="8" height="1" fill="#655ea8"/><rect x="6" y="7" width="6" height="7" fill="#655ea8"/><rect x="9" y="3" width="1" height="1" fill="#40908a"/><rect x="12" y="5" width="1" height="1" fill="#40908a"/><rect x="6" y="6" width="1" height="1" fill="#5a95da"/><rect x="7" y="6" width="1" height="1" fill="#40908a"/><rect x="10" y="6" width="1" height="1" fill="#40908a"/><rect x="2" y="8" width="1" height="1" fill="#9a9aaa"/><rect x="3" y="9" width="1" height="1" fill="#5a95da"/><rect x="4" y="9" width="1" height="1" fill="#40908a"/><rect x="3" y="10" width="2" height="1" fill="#655ea8"/><rect x="4" y="11" width="2" height="1" fill="#655ea8"/><rect x="5" y="12" width="1" height="1" fill="#655ea8"/><rect x="2" y="9" width="1" height="1" fill="#5a95da"/><rect x="4" y="12" width="1" height="1" fill="#655ea8"/><rect x="5" y="13" width="1" height="1" fill="#655ea8"/><rect x="8" y="14" width="3" height="1" fill="#40908a"/><rect x="7" y="11" width="4" height="2" fill="#5a95da"/><rect x="7" y="13" width="3" height="1" fill="#5a95da"/><rect x="6" y="12" width="1" height="2" fill="#40908a"/><rect x="6" y="10" width="2" height="1" fill="#40908a"/><rect x="10" y="10" width="2" height="1" fill="#40908a"/><rect x="11" y="11" width="1" height="2" fill="#40908a"/><rect x="10" y="13" width="1" height="1" fill="#40908a"/></svg>
<div class="t" style="left:62.00px;top:544.84px;font-size:12px;transform:scaleX(0.895);color:#000;">REMOVE Structure:</div>
<div class="t" style="left:168.70px;top:544.84px;font-size:12px;transform:scaleX(0.91);color:#000;">Group = ALL</div>
</div>
<div style="position:absolute;left:230px;top:423px;width:850px;height:306px;background:#f0f0f0;box-sizing:border-box;border:1px solid #3c3c3c;border-top-color:#555;border-left-color:#555;box-shadow:inset 0 0 0 1px #fff;"></div>
<div style="position:absolute;left:231px;top:424px;width:848px;height:26px;background:#fff;"></div>
<svg class="abs" style="left:237px;top:429px" width="16" height="16" viewBox="0 0 16 16"><rect width="16" height="16" fill="#0a76d9"/><path d="M4 4.8 Q4 2 6.8 2 H12 V4.4 H6.3 V6.8 H11 V9.2 H6.3 V11.6 H12 V14 H6.8 Q4 14 4 11.2 Z" fill="#fff"/></svg>
<div class="t" style="left:257.20px;top:429.84px;font-size:12px;transform:scaleX(0.975);color:#000;">Stage Data</div>
<svg class="abs" style="left:1063px;top:432px" width="10" height="10" viewBox="0 0 10 10"><path d="M0.5 0.5 L9.5 9.5 M9.5 0.5 L0.5 9.5" stroke="#000" stroke-width="1.05"/></svg>
<div style="position:absolute;left:239px;top:460px;width:832px;height:257px;box-sizing:border-box;border:1px solid #dcdcdc;"></div>
<div style="position:absolute;left:250px;top:472px;width:810px;height:176px;box-sizing:border-box;border:1px solid #dcdcdc;"></div>
<div style="position:absolute;left:262px;top:482px;width:707px;height:130px;background:#fff;"></div>
<div style="position:absolute;left:263px;top:483px;width:705px;height:128px;box-sizing:border-box;border:1px solid #000;background:#fff;"></div>
<div style="position:absolute;left:264px;top:484px;width:703px;height:1px;background:#c4c4c4;"></div>
<div style="position:absolute;left:264px;top:484px;width:1px;height:108px;background:#c4c4c4;"></div>
<div style="position:absolute;left:408px;top:484px;width:1px;height:20px;background:#e5e5e5;"></div>
<div style="position:absolute;left:499px;top:484px;width:1px;height:20px;background:#e5e5e5;"></div>
<div style="position:absolute;left:622px;top:484px;width:1px;height:20px;background:#e5e5e5;"></div>
<div style="position:absolute;left:715px;top:484px;width:1px;height:20px;background:#e5e5e5;"></div>
<div style="position:absolute;left:803px;top:484px;width:1px;height:20px;background:#e5e5e5;"></div>
<div style="position:absolute;left:885px;top:484px;width:1px;height:20px;background:#e5e5e5;"></div>
<div style="position:absolute;left:966px;top:484px;width:1px;height:20px;background:#e5e5e5;"></div>
<div style="position:absolute;left:264px;top:504px;width:703px;height:1px;background:#a0a0a0;"></div>
<div style="position:absolute;left:716px;top:505px;width:87px;height:21px;background:#f0f0f0;"></div>
<div style="position:absolute;left:804px;top:505px;width:81px;height:21px;background:#f0f0f0;"></div>
<div style="position:absolute;left:886px;top:505px;width:80px;height:21px;background:#f0f0f0;"></div>
<div style="position:absolute;left:716px;top:527px;width:87px;height:21px;background:#f0f0f0;"></div>
<div style="position:absolute;left:804px;top:527px;width:81px;height:21px;background:#f0f0f0;"></div>
<div style="position:absolute;left:886px;top:527px;width:80px;height:21px;background:#f0f0f0;"></div>
<div style="position:absolute;left:716px;top:549px;width:87px;height:21px;background:#f0f0f0;"></div>
<div style="position:absolute;left:804px;top:549px;width:81px;height:21px;background:#f0f0f0;"></div>
<div style="position:absolute;left:886px;top:549px;width:80px;height:21px;background:#f0f0f0;"></div>
<div style="position:absolute;left:623px;top:549px;width:92px;height:21px;background:#f0f0f0;"></div>
<div style="position:absolute;left:623px;top:571px;width:92px;height:21px;background:#f0f0f0;"></div>
<div style="position:absolute;left:264px;top:526px;width:703px;height:1px;background:#a0a0a0;"></div>
<div style="position:absolute;left:264px;top:548px;width:703px;height:1px;background:#a0a0a0;"></div>
<div style="position:absolute;left:264px;top:570px;width:703px;height:1px;background:#a0a0a0;"></div>
<div style="position:absolute;left:264px;top:592px;width:703px;height:1px;background:#a0a0a0;"></div>
<div style="position:absolute;left:408px;top:505px;width:1px;height:87px;background:#a0a0a0;"></div>
<div style="position:absolute;left:499px;top:505px;width:1px;height:87px;background:#a0a0a0;"></div>
<div style="position:absolute;left:622px;top:505px;width:1px;height:87px;background:#a0a0a0;"></div>
<div style="position:absolute;left:715px;top:505px;width:1px;height:87px;background:#a0a0a0;"></div>
<div style="position:absolute;left:803px;top:505px;width:1px;height:87px;background:#a0a0a0;"></div>
<div style="position:absolute;left:885px;top:505px;width:1px;height:87px;background:#a0a0a0;"></div>
<div style="position:absolute;left:966px;top:505px;width:1px;height:87px;background:#a0a0a0;"></div>
<div style="position:absolute;left:264px;top:592px;width:703px;height:18px;background:#ababab;"></div>
<div style="position:absolute;left:263px;top:505px;width:145px;height:21px;background:#e3e3e3;"></div>
<div style="position:absolute;left:263px;top:505px;width:1px;height:21px;background:#b4b4b4;"></div>
<div style="position:absolute;left:407px;top:505px;width:1px;height:21px;background:#0078d7;"></div>
<div style="position:absolute;left:265px;top:525px;width:143px;height:1px;background:#0078d7;"></div>
<svg class="abs" style="left:394px;top:512px" width="9" height="6" viewBox="0 0 9 6"><path d="M0.5 0.8 L4.5 4.8 L8.5 0.8" stroke="#404040" stroke-width="1" fill="none"/></svg>
<div class="t" style="left:311.30px;top:486.84px;font-size:12px;transform:scaleX(0.88);color:#000;">Operation</div>
<div class="t" style="left:426.90px;top:486.84px;font-size:12px;transform:scaleX(0.91);color:#000;">Object Type</div>
<div class="t" style="left:533.50px;top:486.84px;font-size:12px;transform:scaleX(0.9);color:#000;">Object Name</div>
<div class="t" style="left:629.20px;top:486.84px;font-size:12px;transform:scaleX(0.885);color:#000;">Age at Add, days</div>
<div class="t" style="left:748.70px;top:486.84px;font-size:12px;transform:scaleX(0.88);color:#000;">Type</div>
<div class="t" style="left:832.20px;top:486.84px;font-size:12px;transform:scaleX(0.88);color:#000;">Name</div>
<div class="t" style="left:895.30px;top:486.84px;font-size:12px;transform:scaleX(0.915);color:#000;">Scale Factor</div>
<div class="t" style="left:266.70px;top:506.84px;font-size:12px;transform:scaleX(0.88);color:#000;">Add Structure</div>
<div class="t" style="left:412.20px;top:507.84px;font-size:12px;transform:scaleX(0.88);color:#000;">Story</div>
<div class="t" style="left:503.20px;top:507.84px;font-size:12px;transform:scaleX(0.88);color:#000;">BASE</div>
<div class="t" style="left:626.20px;top:507.84px;font-size:12px;transform:scaleX(0.88);color:#000;">0</div>
<div class="t" style="left:268.20px;top:529.84px;font-size:12px;transform:scaleX(0.88);color:#000;">Add Structure</div>
<div class="t" style="left:412.20px;top:529.84px;font-size:12px;transform:scaleX(0.88);color:#000;">Story</div>
<div class="t" style="left:503.20px;top:529.84px;font-size:12px;transform:scaleX(0.88);color:#000;">B5</div>
<div class="t" style="left:626.20px;top:529.84px;font-size:12px;transform:scaleX(0.88);color:#000;">0</div>
<div class="t" style="left:268.20px;top:551.84px;font-size:12px;transform:scaleX(0.88);color:#000;">Remove Structure</div>
<div class="t" style="left:412.20px;top:551.84px;font-size:12px;transform:scaleX(0.88);color:#000;">Group</div>
<div class="t" style="left:503.20px;top:551.84px;font-size:12px;transform:scaleX(0.88);color:#000;">ALL</div>
<div class="t" style="left:268.20px;top:573.84px;font-size:12px;transform:scaleX(0.88);color:#000;">Load Objects If Added</div>
<div class="t" style="left:412.20px;top:573.84px;font-size:12px;transform:scaleX(0.88);color:#000;">Group</div>
<div class="t" style="left:503.20px;top:573.84px;font-size:12px;transform:scaleX(0.88);color:#000;">ALL</div>
<div class="t" style="left:719.20px;top:573.84px;font-size:12px;transform:scaleX(0.88);color:#000;">Load Pattern</div>
<div class="t" style="left:807.20px;top:573.84px;font-size:12px;transform:scaleX(0.88);color:#000;">NONE</div>
<div class="t" style="left:889.20px;top:573.84px;font-size:12px;transform:scaleX(0.88);color:#000;">1</div>
<div style="position:absolute;left:980px;top:510px;width:67px;height:21px;box-sizing:border-box;border:1px solid #adadad;background:#e1e1e1;"></div>
<div class="t" style="left:1002.20px;top:512.84px;font-size:12px;transform:scaleX(0.88);color:#000;">Add</div>
<div style="position:absolute;left:980px;top:541px;width:67px;height:21px;box-sizing:border-box;border:1px solid #adadad;background:#e1e1e1;"></div>
<div class="t" style="left:989.80px;top:543.84px;font-size:12px;transform:scaleX(0.88);color:#000;">Add Copy</div>
<div style="position:absolute;left:980px;top:572px;width:67px;height:21px;box-sizing:border-box;border:1px solid #adadad;background:#e1e1e1;"></div>
<div class="t" style="left:996.60px;top:574.84px;font-size:12px;transform:scaleX(0.88);color:#000;">Delete</div>
<div style="position:absolute;left:384px;top:621px;width:22px;height:19px;box-sizing:border-box;border:1px solid #adadad;background:#e1e1e1;"></div>
<svg class="abs" style="left:384px;top:621px" width="22" height="19" viewBox="0 0 22 19"><rect x="7" y="4" width="2" height="12.5" fill="#344a66"/><path d="M9.7 10.2 L16.2 3.8 V16.6 Z" fill="#344a66"/></svg>
<div style="position:absolute;left:415px;top:621px;width:22px;height:19px;box-sizing:border-box;border:1px solid #adadad;background:#e1e1e1;"></div>
<svg class="abs" style="left:415px;top:621px" width="22" height="19" viewBox="0 0 22 19"><path d="M7.8 10.2 L14.4 3.8 V16.6 Z" fill="#344a66"/></svg>
<div style="position:absolute;left:861px;top:621px;width:22px;height:19px;box-sizing:border-box;border:1px solid #adadad;background:#e1e1e1;"></div>
<svg class="abs" style="left:861px;top:621px" width="22" height="19" viewBox="0 0 22 19"><path d="M8.6 3.8 L15.2 10.2 L8.6 16.6 Z" fill="#344a66"/></svg>
<div style="position:absolute;left:892px;top:621px;width:22px;height:19px;box-sizing:border-box;border:1px solid #adadad;background:#e1e1e1;"></div>
<svg class="abs" style="left:892px;top:621px" width="22" height="19" viewBox="0 0 22 19"><path d="M6.5 3.8 L13.1 10.2 L6.5 16.6 Z" fill="#344a66"/><rect x="14" y="4" width="2" height="12.5" fill="#344a66"/></svg>
<div class="t" style="left:448.80px;top:622.84px;font-size:12px;transform:scaleX(0.88);color:#000;">Stage Name:</div>
<div style="position:absolute;left:521px;top:619px;width:166px;height:21px;box-sizing:border-box;border:1px solid #7a7a7a;background:#fff;"></div>
<div class="t" style="left:525.00px;top:622.34px;font-size:12px;transform:scaleX(0.88);color:#000;">1</div>
<svg class="abs" style="left:673px;top:626px" width="10" height="8" viewBox="0 0 10 8"><path d="M1 1.6 L5 5.5 L9 1.6" stroke="#404040" stroke-width="1.3" fill="none"/></svg>
<div class="t" style="left:704.40px;top:622.84px;font-size:12px;transform:scaleX(0.895);color:#000;">Stage:</div>
<div style="position:absolute;left:741px;top:620px;width:62px;height:20px;box-sizing:border-box;border:1px solid #7a7a7a;background:#fff;"></div>
<div class="t" style="left:744.70px;top:622.34px;font-size:12px;transform:scaleX(0.88);color:#000;">1</div>
<div class="t" style="left:808.70px;top:622.84px;font-size:12px;transform:scaleX(0.92);color:#000;">of 57</div>
<div style="position:absolute;left:570px;top:657px;width:154px;height:21px;box-sizing:border-box;border:2px solid #0078d7;background:#e1e1e1;"></div>
<div class="t" style="left:600.20px;top:660.04px;font-size:12px;transform:scaleX(0.915);color:#000;">Show Stage Tree...</div>
<div style="position:absolute;left:559px;top:686px;width:67px;height:21px;box-sizing:border-box;border:1px solid #adadad;background:#e1e1e1;"></div>
<div class="t" style="left:582.50px;top:688.84px;font-size:12px;transform:scaleX(0.88);color:#000;">OK</div>
<div style="position:absolute;left:669px;top:686px;width:67px;height:21px;box-sizing:border-box;border:1px solid #adadad;background:#e1e1e1;"></div>
<div class="t" style="left:683.80px;top:688.84px;font-size:12px;transform:scaleX(0.88);color:#000;">Cancel</div>
</body></html>
